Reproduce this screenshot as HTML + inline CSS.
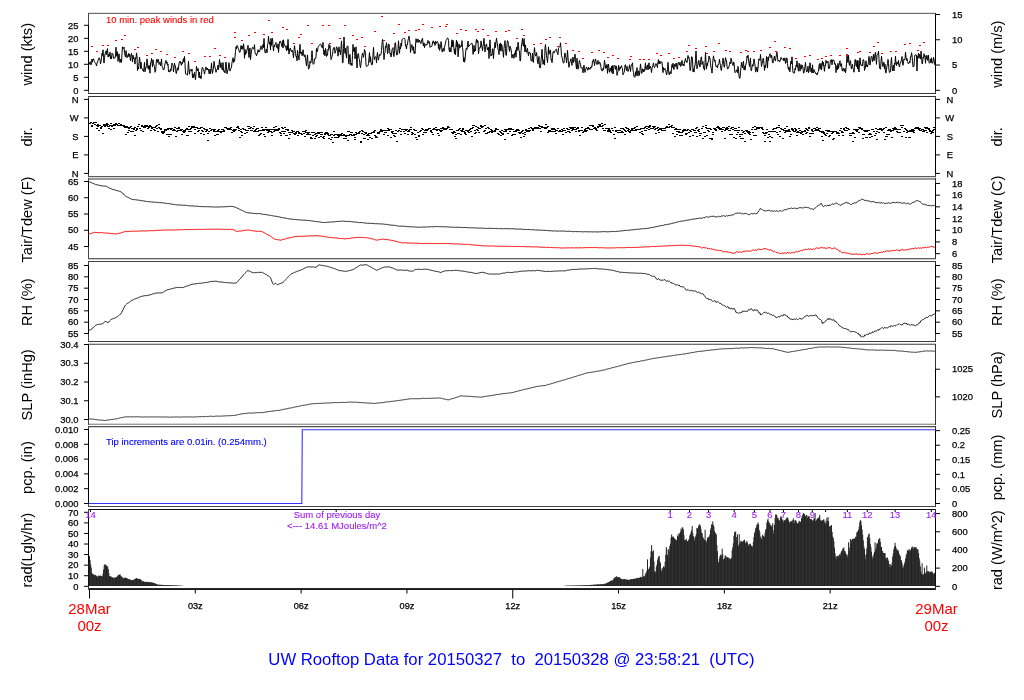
<!DOCTYPE html><html><head><meta charset="utf-8"><style>html,body{margin:0;padding:0;background:#fff;}svg{display:block;will-change:transform}text{font-family:"Liberation Sans",sans-serif;stroke:#000;stroke-width:0.25px}.r{stroke:#f00;stroke-width:.12px}.b{stroke:#00f;stroke-width:.12px}.p{stroke:#a020f0;stroke-width:.12px}.n{stroke:none}</style></head><body>
<svg width="1024" height="700" viewBox="0 0 1024 700">
<rect x="0" y="0" width="1024" height="700" fill="#fff"/>
<g shape-rendering="crispEdges"><rect x="88" y="13" width="848" height="1" fill="#6a6a6a"/><rect x="88" y="12" width="848" height="1" fill="#e6e6e6"/><rect x="88" y="93" width="848" height="1" fill="#3a3a3a"/><rect x="88" y="96" width="848" height="1" fill="#333"/><rect x="88" y="176" width="848" height="1" fill="#5a5a5a"/><rect x="88" y="177" width="848" height="1" fill="#dddddd"/><rect x="88" y="178" width="848" height="1" fill="#9a9a9a"/><rect x="88" y="179" width="848" height="1" fill="#9a9a9a"/><rect x="88" y="258" width="848" height="1" fill="#606060"/><rect x="88" y="259" width="848" height="1" fill="#cfcfcf"/><rect x="88" y="261" width="848" height="1" fill="#444"/><rect x="88" y="341" width="848" height="1" fill="#3c3c3c"/><rect x="88" y="343" width="848" height="1" fill="#cccccc"/><rect x="88" y="344" width="848" height="1" fill="#707070"/><rect x="88" y="424" width="848" height="1" fill="#9c9c9c"/><rect x="88" y="423" width="848" height="1" fill="#d8d8d8"/><rect x="88" y="426" width="848" height="1" fill="#505050"/><rect x="88" y="427" width="848" height="1" fill="#d0d0d0"/><rect x="88" y="506" width="848" height="1" fill="#444"/><rect x="88" y="509" width="848" height="1" fill="#111"/><rect x="88" y="588" width="848" height="1" fill="#2a2a2a"/><rect x="88" y="589" width="848" height="1" fill="#1a1a1a"/><rect x="88" y="13" width="1" height="81" fill="#444"/><rect x="935" y="13" width="1" height="81" fill="#333"/><rect x="88" y="96" width="1" height="81" fill="#444"/><rect x="935" y="96" width="1" height="81" fill="#333"/><rect x="88" y="178" width="1" height="81" fill="#444"/><rect x="935" y="178" width="1" height="81" fill="#333"/><rect x="88" y="261" width="1" height="81" fill="#444"/><rect x="935" y="261" width="1" height="81" fill="#333"/><rect x="88" y="344" width="1" height="81" fill="#444"/><rect x="935" y="344" width="1" height="81" fill="#333"/><rect x="88" y="426" width="1" height="81" fill="#444"/><rect x="935" y="426" width="1" height="81" fill="#333"/><rect x="88" y="509" width="1" height="81" fill="#444"/><rect x="935" y="509" width="1" height="81" fill="#333"/></g>
<line x1="88.5" y1="25.30" x2="88.5" y2="90.30" stroke="#000" stroke-width="1"/>
<line x1="84.0" y1="90.30" x2="88.5" y2="90.30" stroke="#000" stroke-width="1"/>
<text x="78.5" y="93.50" font-size="9.4" text-anchor="end">0</text>
<line x1="84.0" y1="77.30" x2="88.5" y2="77.30" stroke="#000" stroke-width="1"/>
<text x="78.5" y="80.50" font-size="9.4" text-anchor="end">5</text>
<line x1="84.0" y1="64.30" x2="88.5" y2="64.30" stroke="#000" stroke-width="1"/>
<text x="78.5" y="67.50" font-size="9.4" text-anchor="end">10</text>
<line x1="84.0" y1="51.30" x2="88.5" y2="51.30" stroke="#000" stroke-width="1"/>
<text x="78.5" y="54.50" font-size="9.4" text-anchor="end">15</text>
<line x1="84.0" y1="38.30" x2="88.5" y2="38.30" stroke="#000" stroke-width="1"/>
<text x="78.5" y="41.50" font-size="9.4" text-anchor="end">20</text>
<line x1="84.0" y1="25.30" x2="88.5" y2="25.30" stroke="#000" stroke-width="1"/>
<text x="78.5" y="28.50" font-size="9.4" text-anchor="end">25</text>
<line x1="935.5" y1="14.49" x2="935.5" y2="90.30" stroke="#000" stroke-width="1"/>
<line x1="935.5" y1="90.30" x2="940.0" y2="90.30" stroke="#000" stroke-width="1"/>
<text x="952" y="93.50" font-size="9.4">0</text>
<line x1="935.5" y1="65.03" x2="940.0" y2="65.03" stroke="#000" stroke-width="1"/>
<text x="952" y="68.23" font-size="9.4">5</text>
<line x1="935.5" y1="39.76" x2="940.0" y2="39.76" stroke="#000" stroke-width="1"/>
<text x="952" y="42.96" font-size="9.4">10</text>
<line x1="935.5" y1="14.49" x2="940.0" y2="14.49" stroke="#000" stroke-width="1"/>
<text x="952" y="17.69" font-size="9.4">15</text>
<line x1="88.5" y1="99.40" x2="88.5" y2="173.40" stroke="#000" stroke-width="1"/>
<line x1="84.0" y1="99.40" x2="88.5" y2="99.40" stroke="#000" stroke-width="1"/>
<text x="78.5" y="102.60" font-size="9.4" text-anchor="end">N</text>
<line x1="84.0" y1="117.90" x2="88.5" y2="117.90" stroke="#000" stroke-width="1"/>
<text x="78.5" y="121.10" font-size="9.4" text-anchor="end">W</text>
<line x1="84.0" y1="136.40" x2="88.5" y2="136.40" stroke="#000" stroke-width="1"/>
<text x="78.5" y="139.60" font-size="9.4" text-anchor="end">S</text>
<line x1="84.0" y1="154.90" x2="88.5" y2="154.90" stroke="#000" stroke-width="1"/>
<text x="78.5" y="158.10" font-size="9.4" text-anchor="end">E</text>
<line x1="84.0" y1="173.40" x2="88.5" y2="173.40" stroke="#000" stroke-width="1"/>
<text x="78.5" y="176.60" font-size="9.4" text-anchor="end">N</text>
<line x1="935.5" y1="99.4" x2="935.5" y2="173.4" stroke="#000" stroke-width="1"/>
<line x1="935.5" y1="99.40" x2="940.0" y2="99.40" stroke="#000" stroke-width="1"/>
<text x="949.8" y="102.80" font-size="9.4" text-anchor="middle">N</text>
<line x1="935.5" y1="117.90" x2="940.0" y2="117.90" stroke="#000" stroke-width="1"/>
<text x="949.8" y="121.30" font-size="9.4" text-anchor="middle">W</text>
<line x1="935.5" y1="136.40" x2="940.0" y2="136.40" stroke="#000" stroke-width="1"/>
<text x="949.8" y="139.80" font-size="9.4" text-anchor="middle">S</text>
<line x1="935.5" y1="154.90" x2="940.0" y2="154.90" stroke="#000" stroke-width="1"/>
<text x="949.8" y="158.30" font-size="9.4" text-anchor="middle">E</text>
<line x1="935.5" y1="173.40" x2="940.0" y2="173.40" stroke="#000" stroke-width="1"/>
<text x="949.8" y="176.80" font-size="9.4" text-anchor="middle">N</text>
<line x1="88.5" y1="181.50" x2="88.5" y2="246.50" stroke="#000" stroke-width="1"/>
<line x1="84.0" y1="246.50" x2="88.5" y2="246.50" stroke="#000" stroke-width="1"/>
<text x="78.5" y="249.70" font-size="9.4" text-anchor="end">45</text>
<line x1="84.0" y1="230.25" x2="88.5" y2="230.25" stroke="#000" stroke-width="1"/>
<text x="78.5" y="233.45" font-size="9.4" text-anchor="end">50</text>
<line x1="84.0" y1="214.00" x2="88.5" y2="214.00" stroke="#000" stroke-width="1"/>
<text x="78.5" y="217.20" font-size="9.4" text-anchor="end">55</text>
<line x1="84.0" y1="197.75" x2="88.5" y2="197.75" stroke="#000" stroke-width="1"/>
<text x="78.5" y="200.95" font-size="9.4" text-anchor="end">60</text>
<line x1="84.0" y1="181.50" x2="88.5" y2="181.50" stroke="#000" stroke-width="1"/>
<text x="78.5" y="184.70" font-size="9.4" text-anchor="end">65</text>
<line x1="935.5" y1="183.45" x2="935.5" y2="253.65" stroke="#000" stroke-width="1"/>
<line x1="935.5" y1="253.65" x2="940.0" y2="253.65" stroke="#000" stroke-width="1"/>
<text x="952" y="256.85" font-size="9.4">6</text>
<line x1="935.5" y1="241.95" x2="940.0" y2="241.95" stroke="#000" stroke-width="1"/>
<text x="952" y="245.15" font-size="9.4">8</text>
<line x1="935.5" y1="230.25" x2="940.0" y2="230.25" stroke="#000" stroke-width="1"/>
<text x="952" y="233.45" font-size="9.4">10</text>
<line x1="935.5" y1="218.55" x2="940.0" y2="218.55" stroke="#000" stroke-width="1"/>
<text x="952" y="221.75" font-size="9.4">12</text>
<line x1="935.5" y1="206.85" x2="940.0" y2="206.85" stroke="#000" stroke-width="1"/>
<text x="952" y="210.05" font-size="9.4">14</text>
<line x1="935.5" y1="195.15" x2="940.0" y2="195.15" stroke="#000" stroke-width="1"/>
<text x="952" y="198.35" font-size="9.4">16</text>
<line x1="935.5" y1="183.45" x2="940.0" y2="183.45" stroke="#000" stroke-width="1"/>
<text x="952" y="186.65" font-size="9.4">18</text>
<line x1="88.5" y1="265.50" x2="88.5" y2="333.51" stroke="#000" stroke-width="1"/>
<line x1="84.0" y1="333.51" x2="88.5" y2="333.51" stroke="#000" stroke-width="1"/>
<text x="78.5" y="336.71" font-size="9.4" text-anchor="end">55</text>
<line x1="84.0" y1="322.18" x2="88.5" y2="322.18" stroke="#000" stroke-width="1"/>
<text x="78.5" y="325.38" font-size="9.4" text-anchor="end">60</text>
<line x1="84.0" y1="310.84" x2="88.5" y2="310.84" stroke="#000" stroke-width="1"/>
<text x="78.5" y="314.04" font-size="9.4" text-anchor="end">65</text>
<line x1="84.0" y1="299.50" x2="88.5" y2="299.50" stroke="#000" stroke-width="1"/>
<text x="78.5" y="302.70" font-size="9.4" text-anchor="end">70</text>
<line x1="84.0" y1="288.17" x2="88.5" y2="288.17" stroke="#000" stroke-width="1"/>
<text x="78.5" y="291.37" font-size="9.4" text-anchor="end">75</text>
<line x1="84.0" y1="276.83" x2="88.5" y2="276.83" stroke="#000" stroke-width="1"/>
<text x="78.5" y="280.03" font-size="9.4" text-anchor="end">80</text>
<line x1="84.0" y1="265.50" x2="88.5" y2="265.50" stroke="#000" stroke-width="1"/>
<text x="78.5" y="268.70" font-size="9.4" text-anchor="end">85</text>
<line x1="935.5" y1="265.50" x2="935.5" y2="333.51" stroke="#000" stroke-width="1"/>
<line x1="935.5" y1="333.51" x2="940.0" y2="333.51" stroke="#000" stroke-width="1"/>
<text x="952" y="336.71" font-size="9.4">55</text>
<line x1="935.5" y1="322.18" x2="940.0" y2="322.18" stroke="#000" stroke-width="1"/>
<text x="952" y="325.38" font-size="9.4">60</text>
<line x1="935.5" y1="310.84" x2="940.0" y2="310.84" stroke="#000" stroke-width="1"/>
<text x="952" y="314.04" font-size="9.4">65</text>
<line x1="935.5" y1="299.50" x2="940.0" y2="299.50" stroke="#000" stroke-width="1"/>
<text x="952" y="302.70" font-size="9.4">70</text>
<line x1="935.5" y1="288.17" x2="940.0" y2="288.17" stroke="#000" stroke-width="1"/>
<text x="952" y="291.37" font-size="9.4">75</text>
<line x1="935.5" y1="276.83" x2="940.0" y2="276.83" stroke="#000" stroke-width="1"/>
<text x="952" y="280.03" font-size="9.4">80</text>
<line x1="935.5" y1="265.50" x2="940.0" y2="265.50" stroke="#000" stroke-width="1"/>
<text x="952" y="268.70" font-size="9.4">85</text>
<line x1="88.5" y1="344.50" x2="88.5" y2="419.50" stroke="#000" stroke-width="1"/>
<line x1="84.0" y1="419.50" x2="88.5" y2="419.50" stroke="#000" stroke-width="1"/>
<text x="78.5" y="422.70" font-size="9.4" text-anchor="end">30.0</text>
<line x1="84.0" y1="400.75" x2="88.5" y2="400.75" stroke="#000" stroke-width="1"/>
<text x="78.5" y="403.95" font-size="9.4" text-anchor="end">30.1</text>
<line x1="84.0" y1="382.00" x2="88.5" y2="382.00" stroke="#000" stroke-width="1"/>
<text x="78.5" y="385.20" font-size="9.4" text-anchor="end">30.2</text>
<line x1="84.0" y1="363.25" x2="88.5" y2="363.25" stroke="#000" stroke-width="1"/>
<text x="78.5" y="366.45" font-size="9.4" text-anchor="end">30.3</text>
<line x1="84.0" y1="344.50" x2="88.5" y2="344.50" stroke="#000" stroke-width="1"/>
<text x="78.5" y="347.70" font-size="9.4" text-anchor="end">30.4</text>
<line x1="935.5" y1="369.21" x2="935.5" y2="396.89" stroke="#000" stroke-width="1"/>
<line x1="935.5" y1="396.89" x2="940.0" y2="396.89" stroke="#000" stroke-width="1"/>
<text x="952" y="400.09" font-size="9.4">1020</text>
<line x1="935.5" y1="369.21" x2="940.0" y2="369.21" stroke="#000" stroke-width="1"/>
<text x="952" y="372.41" font-size="9.4">1025</text>
<line x1="88.5" y1="429.50" x2="88.5" y2="503.50" stroke="#000" stroke-width="1"/>
<line x1="84.0" y1="503.50" x2="88.5" y2="503.50" stroke="#000" stroke-width="1"/>
<text x="78.5" y="506.70" font-size="9.4" text-anchor="end">0.000</text>
<line x1="84.0" y1="488.70" x2="88.5" y2="488.70" stroke="#000" stroke-width="1"/>
<text x="78.5" y="491.90" font-size="9.4" text-anchor="end">0.002</text>
<line x1="84.0" y1="473.90" x2="88.5" y2="473.90" stroke="#000" stroke-width="1"/>
<text x="78.5" y="477.10" font-size="9.4" text-anchor="end">0.004</text>
<line x1="84.0" y1="459.10" x2="88.5" y2="459.10" stroke="#000" stroke-width="1"/>
<text x="78.5" y="462.30" font-size="9.4" text-anchor="end">0.006</text>
<line x1="84.0" y1="444.30" x2="88.5" y2="444.30" stroke="#000" stroke-width="1"/>
<text x="78.5" y="447.50" font-size="9.4" text-anchor="end">0.008</text>
<line x1="84.0" y1="429.50" x2="88.5" y2="429.50" stroke="#000" stroke-width="1"/>
<text x="78.5" y="432.70" font-size="9.4" text-anchor="end">0.010</text>
<line x1="935.5" y1="430.67" x2="935.5" y2="503.50" stroke="#000" stroke-width="1"/>
<line x1="935.5" y1="503.50" x2="940.0" y2="503.50" stroke="#000" stroke-width="1"/>
<text x="952" y="506.70" font-size="9.4">0</text>
<line x1="935.5" y1="488.93" x2="940.0" y2="488.93" stroke="#000" stroke-width="1"/>
<text x="952" y="492.13" font-size="9.4">0.05</text>
<line x1="935.5" y1="474.37" x2="940.0" y2="474.37" stroke="#000" stroke-width="1"/>
<text x="952" y="477.57" font-size="9.4">0.1</text>
<line x1="935.5" y1="459.80" x2="940.0" y2="459.80" stroke="#000" stroke-width="1"/>
<text x="952" y="463.00" font-size="9.4">0.15</text>
<line x1="935.5" y1="445.23" x2="940.0" y2="445.23" stroke="#000" stroke-width="1"/>
<text x="952" y="448.43" font-size="9.4">0.2</text>
<line x1="935.5" y1="430.67" x2="940.0" y2="430.67" stroke="#000" stroke-width="1"/>
<text x="952" y="433.87" font-size="9.4">0.25</text>
<line x1="88.5" y1="512.31" x2="88.5" y2="586.30" stroke="#000" stroke-width="1"/>
<line x1="84.0" y1="586.30" x2="88.5" y2="586.30" stroke="#000" stroke-width="1"/>
<text x="78.5" y="589.50" font-size="9.4" text-anchor="end">0</text>
<line x1="84.0" y1="575.73" x2="88.5" y2="575.73" stroke="#000" stroke-width="1"/>
<text x="78.5" y="578.93" font-size="9.4" text-anchor="end">10</text>
<line x1="84.0" y1="565.16" x2="88.5" y2="565.16" stroke="#000" stroke-width="1"/>
<text x="78.5" y="568.36" font-size="9.4" text-anchor="end">20</text>
<line x1="84.0" y1="554.59" x2="88.5" y2="554.59" stroke="#000" stroke-width="1"/>
<text x="78.5" y="557.79" font-size="9.4" text-anchor="end">30</text>
<line x1="84.0" y1="544.02" x2="88.5" y2="544.02" stroke="#000" stroke-width="1"/>
<text x="78.5" y="547.22" font-size="9.4" text-anchor="end">40</text>
<line x1="84.0" y1="533.45" x2="88.5" y2="533.45" stroke="#000" stroke-width="1"/>
<text x="78.5" y="536.65" font-size="9.4" text-anchor="end">50</text>
<line x1="84.0" y1="522.88" x2="88.5" y2="522.88" stroke="#000" stroke-width="1"/>
<text x="78.5" y="526.08" font-size="9.4" text-anchor="end">60</text>
<line x1="84.0" y1="512.31" x2="88.5" y2="512.31" stroke="#000" stroke-width="1"/>
<text x="78.5" y="515.51" font-size="9.4" text-anchor="end">70</text>
<line x1="935.5" y1="513.59" x2="935.5" y2="586.30" stroke="#000" stroke-width="1"/>
<line x1="935.5" y1="586.30" x2="940.0" y2="586.30" stroke="#000" stroke-width="1"/>
<text x="952" y="589.50" font-size="9.4">0</text>
<line x1="935.5" y1="568.12" x2="940.0" y2="568.12" stroke="#000" stroke-width="1"/>
<text x="952" y="571.32" font-size="9.4">200</text>
<line x1="935.5" y1="549.95" x2="940.0" y2="549.95" stroke="#000" stroke-width="1"/>
<text x="952" y="553.15" font-size="9.4">400</text>
<line x1="935.5" y1="531.77" x2="940.0" y2="531.77" stroke="#000" stroke-width="1"/>
<text x="952" y="534.97" font-size="9.4">600</text>
<line x1="935.5" y1="513.59" x2="940.0" y2="513.59" stroke="#000" stroke-width="1"/>
<text x="952" y="516.79" font-size="9.4">800</text>
<text transform="translate(31.5,54.20) rotate(-90)" font-size="14.6" class="n" text-anchor="middle">wind (kts)</text>
<text transform="translate(1001.5,54.20) rotate(-90)" font-size="14.6" class="n" text-anchor="middle">wind (m/s)</text>
<text transform="translate(31.5,136.87) rotate(-90)" font-size="14.6" class="n" text-anchor="middle">dir.</text>
<text transform="translate(1001.5,136.87) rotate(-90)" font-size="14.6" class="n" text-anchor="middle">dir.</text>
<text transform="translate(31.5,219.53) rotate(-90)" font-size="14.6" class="n" text-anchor="middle">Tair/Tdew (F)</text>
<text transform="translate(1001.5,219.53) rotate(-90)" font-size="14.6" class="n" text-anchor="middle">Tair/Tdew (C)</text>
<text transform="translate(31.5,302.20) rotate(-90)" font-size="14.6" class="n" text-anchor="middle">RH (%)</text>
<text transform="translate(1001.5,302.20) rotate(-90)" font-size="14.6" class="n" text-anchor="middle">RH (%)</text>
<text transform="translate(31.5,384.87) rotate(-90)" font-size="14.6" class="n" text-anchor="middle">SLP (inHg)</text>
<text transform="translate(1001.5,384.87) rotate(-90)" font-size="14.6" class="n" text-anchor="middle">SLP (hPa)</text>
<text transform="translate(31.5,467.54) rotate(-90)" font-size="14.6" class="n" text-anchor="middle">pcp. (in)</text>
<text transform="translate(1001.5,467.54) rotate(-90)" font-size="14.6" class="n" text-anchor="middle">pcp. (mm)</text>
<text transform="translate(31.5,550.20) rotate(-90)" font-size="14.6" class="n" text-anchor="middle">rad(Lgly/hr)</text>
<text transform="translate(1001.5,550.20) rotate(-90)" font-size="14.6" class="n" text-anchor="middle">rad (W/m^2)</text>
<line x1="89.50" y1="589.5" x2="89.50" y2="598.5" stroke="#000" stroke-width="1"/>
<line x1="195.31" y1="589.5" x2="195.31" y2="593.5" stroke="#000" stroke-width="1"/>
<text x="195.31" y="609" font-size="9.2" text-anchor="middle">03z</text>
<line x1="301.12" y1="589.5" x2="301.12" y2="593.5" stroke="#000" stroke-width="1"/>
<text x="301.12" y="609" font-size="9.2" text-anchor="middle">06z</text>
<line x1="406.93" y1="589.5" x2="406.93" y2="593.5" stroke="#000" stroke-width="1"/>
<text x="406.93" y="609" font-size="9.2" text-anchor="middle">09z</text>
<line x1="512.74" y1="589.5" x2="512.74" y2="598.5" stroke="#000" stroke-width="1"/>
<text x="512.74" y="609" font-size="9.2" text-anchor="middle">12z</text>
<line x1="618.55" y1="589.5" x2="618.55" y2="593.5" stroke="#000" stroke-width="1"/>
<text x="618.55" y="609" font-size="9.2" text-anchor="middle">15z</text>
<line x1="724.36" y1="589.5" x2="724.36" y2="593.5" stroke="#000" stroke-width="1"/>
<text x="724.36" y="609" font-size="9.2" text-anchor="middle">18z</text>
<line x1="830.17" y1="589.5" x2="830.17" y2="593.5" stroke="#000" stroke-width="1"/>
<text x="830.17" y="609" font-size="9.2" text-anchor="middle">21z</text>
<text x="89.5" y="614" font-size="15" fill="#f00" class="n" text-anchor="middle">28Mar</text>
<text x="89.5" y="631" font-size="15" fill="#f00" class="n" text-anchor="middle">00z</text>
<text x="936.5" y="614" font-size="15" fill="#f00" class="n" text-anchor="middle">29Mar</text>
<text x="936.5" y="631" font-size="15" fill="#f00" class="n" text-anchor="middle">00z</text>
<text x="511.5" y="665" font-size="16.7" fill="#00f" class="n" text-anchor="middle" style="white-space:pre" xml:space="preserve">UW Rooftop Data for 20150327  to  20150328 @ 23:58:21  (UTC)</text>
<polyline fill="none" stroke="#000" stroke-width="1" stroke-linejoin="round" points="89.0,63.0 89.5,64.2 90.0,61.8 90.5,62.0 91.0,64.9 91.5,62.8 92.0,59.0 92.5,62.2 93.0,59.1 93.5,58.8 94.0,60.4 94.5,61.4 95.0,62.7 95.5,63.4 96.0,64.1 96.5,66.0 97.0,63.0 97.5,62.0 98.0,60.6 98.5,58.5 99.0,57.7 99.5,58.0 100.0,60.2 100.5,63.9 101.0,61.8 101.5,58.1 102.0,53.4 102.5,55.4 103.0,49.8 103.5,57.4 104.0,63.1 104.5,57.7 105.0,53.5 105.5,53.4 106.0,50.8 106.5,54.7 107.0,50.8 107.5,48.6 108.0,57.1 108.5,55.9 109.0,54.2 109.5,56.2 110.0,52.1 110.5,58.9 111.0,56.3 111.5,58.8 112.0,53.1 112.5,53.8 113.0,54.0 113.5,58.3 114.0,58.2 114.5,58.1 115.0,58.1 115.5,55.1 116.0,47.2 116.5,55.3 117.0,56.4 117.5,51.8 118.0,61.4 118.5,57.8 119.0,53.9 119.5,58.7 120.0,62.5 120.5,59.2 121.0,62.1 121.5,62.3 122.0,53.3 122.5,46.8 123.0,48.7 123.5,48.4 124.0,47.1 124.5,52.9 125.0,55.0 125.5,57.0 126.0,50.6 126.5,53.8 127.0,57.8 127.5,55.8 128.0,56.0 128.5,53.5 129.0,56.9 129.5,53.9 130.0,56.2 130.5,60.9 131.0,55.4 131.5,53.3 132.0,56.6 132.5,62.1 133.0,55.2 133.5,58.5 134.0,57.6 134.5,60.5 135.0,64.1 135.5,57.7 136.0,58.6 136.5,52.9 137.0,56.1 137.5,70.5 138.0,67.3 138.5,68.9 139.0,63.1 139.5,57.1 140.0,60.4 140.5,68.7 141.0,62.2 141.5,68.4 142.0,68.7 142.5,68.9 143.0,71.0 143.5,71.5 144.0,67.9 144.5,62.4 145.0,71.8 145.5,67.9 146.0,67.9 146.5,65.4 147.0,58.9 147.5,62.8 148.0,68.7 148.5,65.7 149.0,69.5 149.5,65.7 150.0,73.2 150.5,62.9 151.0,62.7 151.5,58.5 152.0,63.1 152.5,66.9 153.0,59.7 153.5,63.6 154.0,65.1 154.5,66.5 155.0,72.3 155.5,71.4 156.0,66.7 156.5,59.3 157.0,60.1 157.5,62.4 158.0,59.1 158.5,59.7 159.0,64.5 159.5,63.5 160.0,62.2 160.5,65.8 161.0,63.7 161.5,58.9 162.0,66.1 162.5,67.1 163.0,68.9 163.5,70.1 164.0,69.5 164.5,66.6 165.0,63.9 165.5,61.4 166.0,60.3 166.5,63.4 167.0,61.9 167.5,65.2 168.0,64.0 168.5,71.6 169.0,70.5 169.5,71.8 170.0,72.0 170.5,68.9 171.0,70.7 171.5,65.6 172.0,63.1 172.5,64.6 173.0,65.2 173.5,71.9 174.0,67.6 174.5,63.2 175.0,66.2 175.5,66.1 176.0,73.3 176.5,73.4 177.0,69.7 177.5,67.7 178.0,70.3 178.5,68.0 179.0,63.9 179.5,61.6 180.0,62.4 180.5,61.4 181.0,64.4 181.5,65.3 182.0,62.3 182.5,63.6 183.0,60.7 183.5,58.5 184.0,62.1 184.5,56.4 185.0,63.7 185.5,73.9 186.0,74.2 186.5,74.1 187.0,74.9 187.5,75.1 188.0,69.2 188.5,61.0 189.0,69.7 189.5,74.2 190.0,69.6 190.5,69.5 191.0,70.3 191.5,71.2 192.0,69.0 192.5,77.7 193.0,74.5 193.5,77.5 194.0,74.0 194.5,72.4 195.0,77.4 195.5,79.7 196.0,73.5 196.5,66.4 197.0,69.5 197.5,71.0 198.0,68.4 198.5,70.8 199.0,77.6 199.5,72.1 200.0,78.1 200.5,76.0 201.0,78.7 201.5,74.5 202.0,68.1 202.5,67.2 203.0,68.8 203.5,70.5 204.0,70.8 204.5,74.2 205.0,71.5 205.5,67.5 206.0,66.9 206.5,69.4 207.0,70.1 207.5,68.2 208.0,69.9 208.5,69.0 209.0,73.8 209.5,73.3 210.0,69.2 210.5,73.8 211.0,69.7 211.5,62.9 212.0,69.7 212.5,73.4 213.0,70.2 213.5,68.5 214.0,61.3 214.5,65.2 215.0,67.3 215.5,69.2 216.0,72.3 216.5,69.8 217.0,70.0 217.5,69.3 218.0,65.0 218.5,69.5 219.0,65.9 219.5,59.4 220.0,64.1 220.5,67.4 221.0,62.8 221.5,67.5 222.0,69.2 222.5,70.0 223.0,62.5 223.5,71.2 224.0,71.3 224.5,70.7 225.0,73.0 225.5,66.3 226.0,62.0 226.5,68.1 227.0,73.8 227.5,70.5 228.0,70.4 228.5,66.2 229.0,62.6 229.5,67.6 230.0,71.1 230.5,69.7 231.0,68.3 231.5,66.9 232.0,62.8 232.5,59.6 233.0,57.8 233.5,62.5 234.0,59.4 234.5,61.4 235.0,56.9 235.5,51.4 236.0,46.8 236.5,48.9 237.0,45.4 237.5,46.1 238.0,48.0 238.5,48.8 239.0,50.7 239.5,52.3 240.0,52.3 240.5,49.5 241.0,45.6 241.5,49.2 242.0,45.8 242.5,47.0 243.0,49.5 243.5,43.8 244.0,47.4 244.5,58.3 245.0,49.5 245.5,54.7 246.0,52.5 246.5,53.1 247.0,48.8 247.5,48.9 248.0,45.3 248.5,51.4 249.0,57.5 249.5,50.0 250.0,47.9 250.5,59.6 251.0,54.7 251.5,51.6 252.0,48.8 252.5,47.4 253.0,47.4 253.5,48.9 254.0,48.8 254.5,44.7 255.0,52.3 255.5,53.9 256.0,53.5 256.5,55.8 257.0,53.6 257.5,53.4 258.0,49.7 258.5,51.8 259.0,51.5 259.5,52.0 260.0,50.0 260.5,47.6 261.0,45.9 261.5,47.5 262.0,49.5 262.5,46.4 263.0,44.5 263.5,47.6 264.0,38.4 264.5,47.1 265.0,52.7 265.5,52.7 266.0,50.1 266.5,49.0 267.0,52.8 267.5,44.8 268.0,43.4 268.5,36.3 269.0,41.8 269.5,44.2 270.0,42.1 270.5,49.9 271.0,38.4 271.5,45.4 272.0,40.2 272.5,38.4 273.0,45.6 273.5,51.0 274.0,45.3 274.5,46.6 275.0,44.6 275.5,43.5 276.0,42.4 276.5,47.2 277.0,47.5 277.5,48.4 278.0,43.9 278.5,52.5 279.0,47.3 279.5,41.7 280.0,41.4 280.5,41.2 281.0,43.7 281.5,43.9 282.0,46.7 282.5,40.6 283.0,48.1 283.5,39.8 284.0,43.9 284.5,44.3 285.0,46.5 285.5,46.1 286.0,48.0 286.5,50.8 287.0,45.6 287.5,49.9 288.0,39.4 288.5,48.9 289.0,54.1 289.5,50.0 290.0,48.1 290.5,48.4 291.0,51.1 291.5,51.7 292.0,50.1 292.5,51.3 293.0,53.7 293.5,58.0 294.0,50.6 294.5,45.7 295.0,49.5 295.5,53.4 296.0,56.5 296.5,56.0 297.0,60.8 297.5,50.3 298.0,54.9 298.5,57.1 299.0,59.9 299.5,50.7 300.0,44.3 300.5,53.2 301.0,53.6 301.5,51.9 302.0,55.7 302.5,55.0 303.0,49.7 303.5,53.6 304.0,56.1 304.5,56.8 305.0,54.7 305.5,58.2 306.0,62.4 306.5,66.0 307.0,59.8 307.5,54.9 308.0,63.2 308.5,69.0 309.0,68.6 309.5,67.7 310.0,61.2 310.5,63.2 311.0,62.5 311.5,57.5 312.0,50.7 312.5,57.4 313.0,64.3 313.5,64.1 314.0,63.6 314.5,58.8 315.0,58.5 315.5,58.8 316.0,56.9 316.5,48.5 317.0,51.6 317.5,51.3 318.0,47.5 318.5,46.2 319.0,45.7 319.5,44.9 320.0,44.4 320.5,43.8 321.0,44.6 321.5,47.1 322.0,47.5 322.5,47.8 323.0,42.4 323.5,51.4 324.0,54.8 324.5,50.4 325.0,55.8 325.5,48.4 326.0,50.9 326.5,56.5 327.0,55.4 327.5,55.1 328.0,49.0 328.5,50.2 329.0,44.4 329.5,48.3 330.0,45.6 330.5,52.9 331.0,59.6 331.5,58.4 332.0,56.7 332.5,54.3 333.0,50.2 333.5,47.7 334.0,47.6 334.5,47.5 335.0,53.3 335.5,51.6 336.0,50.3 336.5,46.9 337.0,47.3 337.5,48.6 338.0,56.2 338.5,52.4 339.0,46.8 339.5,51.5 340.0,50.6 340.5,54.9 341.0,48.3 341.5,40.9 342.0,49.2 342.5,62.8 343.0,62.8 343.5,48.5 344.0,37.0 344.5,46.5 345.0,53.4 345.5,48.3 346.0,54.1 346.5,58.1 347.0,46.4 347.5,45.9 348.0,46.2 348.5,62.2 349.0,64.2 349.5,55.8 350.0,54.3 350.5,62.4 351.0,65.2 351.5,63.0 352.0,65.6 352.5,55.3 353.0,44.4 353.5,51.3 354.0,51.3 354.5,47.6 355.0,58.9 355.5,54.3 356.0,46.8 356.5,58.3 357.0,68.0 357.5,55.6 358.0,53.7 358.5,53.8 359.0,58.8 359.5,59.6 360.0,65.4 360.5,67.8 361.0,64.0 361.5,59.6 362.0,55.8 362.5,53.0 363.0,54.9 363.5,57.3 364.0,54.6 364.5,49.5 365.0,50.9 365.5,55.2 366.0,64.9 366.5,66.4 367.0,66.2 367.5,66.1 368.0,65.5 368.5,63.6 369.0,57.9 369.5,52.6 370.0,62.2 370.5,56.8 371.0,61.6 371.5,64.9 372.0,64.6 372.5,64.4 373.0,54.9 373.5,47.4 374.0,56.6 374.5,59.5 375.0,57.4 375.5,56.6 376.0,57.1 376.5,62.7 377.0,55.4 377.5,52.4 378.0,58.1 378.5,60.1 379.0,56.9 379.5,54.4 380.0,55.6 380.5,55.0 381.0,54.3 381.5,50.7 382.0,44.2 382.5,39.4 383.0,43.2 383.5,50.6 384.0,59.6 384.5,53.2 385.0,52.6 385.5,45.9 386.0,47.6 386.5,42.7 387.0,46.3 387.5,53.6 388.0,52.9 388.5,44.1 389.0,44.0 389.5,47.6 390.0,54.1 390.5,53.3 391.0,57.0 391.5,55.2 392.0,49.7 392.5,48.4 393.0,47.6 393.5,55.3 394.0,56.6 394.5,50.7 395.0,42.9 395.5,42.8 396.0,49.1 396.5,54.8 397.0,55.0 397.5,54.7 398.0,48.6 398.5,40.8 399.0,48.2 399.5,53.3 400.0,46.7 400.5,48.9 401.0,43.0 401.5,46.3 402.0,39.6 402.5,38.9 403.0,38.7 403.5,38.4 404.0,38.5 404.5,38.5 405.0,39.5 405.5,46.0 406.0,45.9 406.5,49.0 407.0,44.1 407.5,44.5 408.0,40.3 408.5,38.5 409.0,36.1 409.5,39.2 410.0,42.5 410.5,52.5 411.0,48.6 411.5,45.2 412.0,44.6 412.5,48.7 413.0,50.4 413.5,46.7 414.0,53.3 414.5,51.3 415.0,53.6 415.5,45.0 416.0,38.7 416.5,40.0 417.0,42.6 417.5,40.4 418.0,38.9 418.5,42.0 419.0,42.4 419.5,40.1 420.0,41.8 420.5,43.0 421.0,43.5 421.5,40.1 422.0,40.1 422.5,38.2 423.0,43.9 423.5,46.0 424.0,42.8 424.5,47.6 425.0,44.9 425.5,45.1 426.0,44.1 426.5,45.1 427.0,44.9 427.5,41.4 428.0,40.4 428.5,42.9 429.0,43.3 429.5,41.7 430.0,47.4 430.5,46.7 431.0,46.2 431.5,46.8 432.0,45.7 432.5,43.0 433.0,40.8 433.5,41.2 434.0,43.4 434.5,42.0 435.0,45.5 435.5,41.5 436.0,41.5 436.5,43.4 437.0,41.7 437.5,41.7 438.0,42.3 438.5,48.5 439.0,44.1 439.5,50.4 440.0,48.7 440.5,47.4 441.0,41.6 441.5,44.3 442.0,51.6 442.5,52.1 443.0,48.6 443.5,48.4 444.0,51.2 444.5,47.1 445.0,45.1 445.5,43.2 446.0,40.5 446.5,39.7 447.0,38.9 447.5,37.8 448.0,38.5 448.5,40.4 449.0,49.6 449.5,51.7 450.0,47.6 450.5,51.3 451.0,52.1 451.5,44.2 452.0,39.8 452.5,46.9 453.0,40.4 453.5,44.0 454.0,49.1 454.5,53.9 455.0,48.7 455.5,55.0 456.0,45.0 456.5,40.1 457.0,47.0 457.5,41.8 458.0,56.8 458.5,52.4 459.0,43.9 459.5,48.2 460.0,47.4 460.5,47.1 461.0,45.1 461.5,46.3 462.0,40.7 462.5,47.7 463.0,51.2 463.5,61.6 464.0,57.6 464.5,62.2 465.0,60.2 465.5,54.0 466.0,48.7 466.5,48.2 467.0,49.5 467.5,44.7 468.0,41.0 468.5,46.8 469.0,46.4 469.5,45.1 470.0,44.5 470.5,44.2 471.0,43.8 471.5,43.4 472.0,43.1 472.5,46.1 473.0,54.3 473.5,52.8 474.0,45.3 474.5,51.7 475.0,49.1 475.5,50.9 476.0,42.4 476.5,39.1 477.0,43.0 477.5,40.4 478.0,40.9 478.5,53.7 479.0,49.6 479.5,48.7 480.0,47.0 480.5,47.4 481.0,40.9 481.5,44.1 482.0,47.2 482.5,50.6 483.0,46.0 483.5,43.2 484.0,38.3 484.5,46.4 485.0,51.9 485.5,47.8 486.0,45.1 486.5,43.9 487.0,47.5 487.5,50.1 488.0,47.8 488.5,47.1 489.0,58.5 489.5,47.6 490.0,39.9 490.5,48.3 491.0,56.1 491.5,54.0 492.0,55.1 492.5,48.7 493.0,49.5 493.5,58.8 494.0,50.6 494.5,46.6 495.0,42.3 495.5,47.6 496.0,42.1 496.5,38.2 497.0,42.0 497.5,43.7 498.0,49.9 498.5,50.5 499.0,54.6 499.5,43.8 500.0,50.8 500.5,43.0 501.0,51.2 501.5,44.0 502.0,46.0 502.5,49.6 503.0,52.1 503.5,57.3 504.0,48.4 504.5,43.6 505.0,40.6 505.5,48.6 506.0,55.5 506.5,55.1 507.0,43.8 507.5,40.6 508.0,41.6 508.5,44.7 509.0,48.0 509.5,51.4 510.0,46.2 510.5,47.9 511.0,49.0 511.5,53.3 512.0,58.1 512.5,54.7 513.0,54.4 513.5,54.8 514.0,58.3 514.5,53.1 515.0,54.8 515.5,50.3 516.0,57.2 516.5,47.2 517.0,50.6 517.5,49.6 518.0,42.2 518.5,45.3 519.0,51.3 519.5,51.3 520.0,61.0 520.5,60.9 521.0,51.2 521.5,44.6 522.0,42.4 522.5,38.3 523.0,45.3 523.5,46.3 524.0,38.6 524.5,45.0 525.0,52.0 525.5,44.9 526.0,50.8 526.5,52.3 527.0,50.7 527.5,48.4 528.0,53.6 528.5,55.7 529.0,52.0 529.5,53.1 530.0,53.2 530.5,53.1 531.0,60.9 531.5,60.7 532.0,61.2 532.5,53.2 533.0,61.8 533.5,62.4 534.0,53.4 534.5,47.6 535.0,53.1 535.5,55.8 536.0,56.1 536.5,52.5 537.0,55.7 537.5,62.5 538.0,63.8 538.5,59.2 539.0,56.5 539.5,67.4 540.0,68.1 540.5,67.7 541.0,60.9 541.5,55.9 542.0,49.3 542.5,58.0 543.0,64.3 543.5,63.0 544.0,59.5 544.5,65.1 545.0,48.0 545.5,44.5 546.0,50.4 546.5,55.7 547.0,58.8 547.5,62.6 548.0,55.9 548.5,46.9 549.0,54.3 549.5,51.0 550.0,51.1 550.5,49.9 551.0,59.6 551.5,59.0 552.0,62.7 552.5,57.9 553.0,51.8 553.5,51.5 554.0,52.7 554.5,52.8 555.0,50.3 555.5,49.9 556.0,49.6 556.5,49.2 557.0,52.2 557.5,53.3 558.0,54.7 558.5,48.2 559.0,47.3 559.5,46.9 560.0,46.4 560.5,42.8 561.0,48.3 561.5,55.6 562.0,57.1 562.5,59.4 563.0,62.5 563.5,62.9 564.0,63.0 564.5,55.1 565.0,52.9 565.5,56.9 566.0,57.2 566.5,62.8 567.0,57.7 567.5,50.4 568.0,57.3 568.5,64.3 569.0,67.3 569.5,63.8 570.0,61.7 570.5,60.9 571.0,58.7 571.5,63.2 572.0,65.4 572.5,59.6 573.0,57.0 573.5,62.6 574.0,61.2 574.5,57.5 575.0,54.1 575.5,59.6 576.0,64.9 576.5,69.0 577.0,58.2 577.5,67.4 578.0,69.2 578.5,68.4 579.0,62.1 579.5,60.4 580.0,62.9 580.5,64.5 581.0,67.9 581.5,68.1 582.0,67.4 582.5,69.3 583.0,72.8 583.5,68.3 584.0,65.2 584.5,68.8 585.0,72.4 585.5,69.4 586.0,69.0 586.5,67.0 587.0,67.9 587.5,70.0 588.0,70.2 588.5,67.4 589.0,69.1 589.5,68.1 590.0,69.3 590.5,67.0 591.0,68.1 591.5,65.9 592.0,66.4 592.5,60.9 593.0,61.6 593.5,59.4 594.0,61.6 594.5,65.6 595.0,61.6 595.5,58.9 596.0,61.4 596.5,63.9 597.0,64.6 597.5,62.8 598.0,60.3 598.5,63.8 599.0,64.3 599.5,62.0 600.0,62.4 600.5,63.5 601.0,67.8 601.5,70.4 602.0,70.7 602.5,70.9 603.0,68.4 603.5,69.8 604.0,65.3 604.5,60.3 605.0,64.0 605.5,68.4 606.0,65.6 606.5,68.0 607.0,64.4 607.5,73.4 608.0,66.7 608.5,64.0 609.0,70.0 609.5,72.3 610.0,68.2 610.5,68.3 611.0,71.3 611.5,66.1 612.0,72.7 612.5,65.6 613.0,74.0 613.5,70.7 614.0,65.2 614.5,65.8 615.0,65.6 615.5,69.4 616.0,65.8 616.5,66.9 617.0,75.4 617.5,72.9 618.0,71.7 618.5,65.3 619.0,70.5 619.5,70.2 620.0,66.8 620.5,68.6 621.0,66.8 621.5,65.6 622.0,67.5 622.5,68.3 623.0,74.8 623.5,73.4 624.0,72.5 624.5,71.3 625.0,64.9 625.5,64.8 626.0,68.4 626.5,70.5 627.0,66.3 627.5,67.4 628.0,71.5 628.5,69.4 629.0,68.8 629.5,64.8 630.0,68.1 630.5,71.6 631.0,66.4 631.5,64.7 632.0,64.9 632.5,62.8 633.0,70.4 633.5,72.5 634.0,76.7 634.5,77.0 635.0,77.2 635.5,71.7 636.0,75.8 636.5,72.7 637.0,67.6 637.5,73.7 638.0,76.1 638.5,70.9 639.0,72.9 639.5,75.3 640.0,69.0 640.5,63.9 641.0,68.3 641.5,73.1 642.0,73.3 642.5,68.9 643.0,69.0 643.5,71.9 644.0,69.7 644.5,71.3 645.0,67.1 645.5,62.8 646.0,69.7 646.5,67.0 647.0,67.3 647.5,64.9 648.0,70.0 648.5,66.4 649.0,62.8 649.5,68.9 650.0,68.0 650.5,66.3 651.0,68.4 651.5,72.6 652.0,68.4 652.5,67.2 653.0,65.1 653.5,62.9 654.0,66.6 654.5,67.7 655.0,66.6 655.5,65.4 656.0,63.5 656.5,65.1 657.0,66.0 657.5,67.7 658.0,61.6 658.5,59.6 659.0,64.0 659.5,61.2 660.0,63.8 660.5,61.6 661.0,61.7 661.5,61.9 662.0,62.0 662.5,68.1 663.0,72.6 663.5,67.6 664.0,69.9 664.5,69.7 665.0,68.5 665.5,69.4 666.0,72.1 666.5,75.0 667.0,73.1 667.5,69.7 668.0,62.3 668.5,69.1 669.0,74.7 669.5,74.5 670.0,71.8 670.5,71.7 671.0,73.8 671.5,68.7 672.0,64.5 672.5,67.3 673.0,63.2 673.5,69.0 674.0,69.6 674.5,64.3 675.0,65.1 675.5,66.5 676.0,63.0 676.5,63.7 677.0,69.1 677.5,69.0 678.0,62.7 678.5,62.4 679.0,64.1 679.5,65.1 680.0,62.2 680.5,66.3 681.0,66.1 681.5,63.8 682.0,60.4 682.5,63.8 683.0,65.6 683.5,64.0 684.0,65.9 684.5,61.3 685.0,60.4 685.5,58.4 686.0,61.7 686.5,61.1 687.0,62.6 687.5,59.6 688.0,55.5 688.5,58.2 689.0,57.5 689.5,61.3 690.0,70.5 690.5,70.5 691.0,64.9 691.5,56.8 692.0,56.8 692.5,59.3 693.0,71.7 693.5,68.7 694.0,72.1 694.5,66.1 695.0,66.2 695.5,59.7 696.0,51.0 696.5,60.4 697.0,68.8 697.5,65.5 698.0,64.8 698.5,60.5 699.0,60.6 699.5,66.6 700.0,67.1 700.5,62.8 701.0,57.7 701.5,56.8 702.0,64.5 702.5,62.6 703.0,61.5 703.5,68.3 704.0,68.5 704.5,70.2 705.0,62.7 705.5,52.4 706.0,62.6 706.5,69.1 707.0,63.5 707.5,65.5 708.0,61.6 708.5,61.5 709.0,56.0 709.5,58.5 710.0,58.1 710.5,63.3 711.0,67.8 711.5,68.8 712.0,73.1 712.5,65.9 713.0,59.2 713.5,55.8 714.0,58.9 714.5,61.3 715.0,60.1 715.5,63.7 716.0,66.6 716.5,66.7 717.0,65.8 717.5,67.8 718.0,64.4 718.5,64.5 719.0,63.2 719.5,59.2 720.0,63.3 720.5,65.4 721.0,70.0 721.5,70.5 722.0,64.8 722.5,63.5 723.0,58.1 723.5,60.9 724.0,66.6 724.5,67.3 725.0,61.9 725.5,57.6 726.0,59.9 726.5,60.3 727.0,66.2 727.5,69.0 728.0,68.7 728.5,68.3 729.0,66.3 729.5,64.7 730.0,62.0 730.5,63.6 731.0,58.1 731.5,59.5 732.0,63.5 732.5,63.5 733.0,65.5 733.5,62.0 734.0,62.4 734.5,68.5 735.0,72.7 735.5,72.3 736.0,71.8 736.5,69.9 737.0,70.2 737.5,72.8 738.0,66.4 738.5,69.9 739.0,76.0 739.5,78.1 740.0,78.4 740.5,71.1 741.0,67.6 741.5,62.0 742.0,65.6 742.5,67.9 743.0,63.6 743.5,61.3 744.0,69.8 744.5,66.4 745.0,70.2 745.5,65.9 746.0,63.8 746.5,61.7 747.0,56.2 747.5,57.9 748.0,55.2 748.5,59.9 749.0,63.6 749.5,66.6 750.0,61.0 750.5,58.0 751.0,70.5 751.5,70.7 752.0,66.9 752.5,64.7 753.0,66.2 753.5,62.7 754.0,58.9 754.5,62.2 755.0,65.0 755.5,71.7 756.0,71.8 756.5,68.0 757.0,67.0 757.5,72.1 758.0,68.3 758.5,61.2 759.0,58.8 759.5,60.0 760.0,60.5 760.5,54.5 761.0,59.8 761.5,66.5 762.0,63.7 762.5,63.0 763.0,58.3 763.5,58.6 764.0,64.6 764.5,70.4 765.0,65.1 765.5,67.5 766.0,63.5 766.5,56.4 767.0,62.0 767.5,68.1 768.0,57.1 768.5,60.5 769.0,55.9 769.5,55.7 770.0,53.7 770.5,55.4 771.0,57.8 771.5,55.1 772.0,58.0 772.5,62.6 773.0,63.1 773.5,60.3 774.0,57.9 774.5,56.0 775.0,60.6 775.5,60.9 776.0,57.2 776.5,54.3 777.0,52.1 777.5,57.2 778.0,61.3 778.5,60.8 779.0,60.1 779.5,61.7 780.0,61.5 780.5,60.3 781.0,57.4 781.5,58.8 782.0,58.5 782.5,59.1 783.0,59.8 783.5,58.3 784.0,61.1 784.5,58.5 785.0,57.8 785.5,63.4 786.0,63.1 786.5,58.1 787.0,58.0 787.5,63.5 788.0,67.5 788.5,69.6 789.0,67.0 789.5,71.6 790.0,71.9 790.5,63.9 791.0,61.0 791.5,63.7 792.0,56.8 792.5,65.7 793.0,72.7 793.5,72.9 794.0,73.0 794.5,73.0 795.0,68.5 795.5,70.0 796.0,65.1 796.5,66.4 797.0,60.9 797.5,67.2 798.0,68.3 798.5,71.2 799.0,63.2 799.5,64.8 800.0,71.2 800.5,67.6 801.0,64.5 801.5,69.1 802.0,65.9 802.5,65.2 803.0,68.2 803.5,73.2 804.0,72.5 804.5,68.9 805.0,66.4 805.5,62.4 806.0,68.8 806.5,72.1 807.0,71.6 807.5,71.0 808.0,66.2 808.5,72.7 809.0,71.3 809.5,67.2 810.0,62.7 810.5,66.3 811.0,71.8 811.5,68.5 812.0,73.0 812.5,64.8 813.0,72.0 813.5,73.0 814.0,69.5 814.5,71.5 815.0,71.6 815.5,73.5 816.0,73.4 816.5,73.5 817.0,75.0 817.5,74.0 818.0,71.7 818.5,71.3 819.0,65.7 819.5,63.6 820.0,69.3 820.5,67.0 821.0,63.3 821.5,70.0 822.0,65.4 822.5,60.9 823.0,65.5 823.5,62.5 824.0,67.6 824.5,71.3 825.0,65.6 825.5,66.1 826.0,60.2 826.5,62.9 827.0,63.1 827.5,61.8 828.0,61.1 828.5,68.6 829.0,67.0 829.5,68.3 830.0,63.5 830.5,60.3 831.0,59.5 831.5,59.9 832.0,64.8 832.5,60.0 833.0,60.0 833.5,60.1 834.0,60.2 834.5,64.1 835.0,64.5 835.5,63.7 836.0,72.6 836.5,67.3 837.0,65.6 837.5,69.7 838.0,63.4 838.5,68.5 839.0,65.5 839.5,62.5 840.0,60.8 840.5,66.3 841.0,65.8 841.5,63.7 842.0,69.6 842.5,71.1 843.0,68.8 843.5,68.1 844.0,71.4 844.5,71.1 845.0,68.6 845.5,72.8 846.0,69.2 846.5,63.7 847.0,54.2 847.5,61.3 848.0,62.5 848.5,55.2 849.0,62.3 849.5,65.3 850.0,61.8 850.5,60.6 851.0,65.9 851.5,68.9 852.0,65.4 852.5,64.4 853.0,68.5 853.5,69.1 854.0,72.2 854.5,67.2 855.0,59.4 855.5,59.8 856.0,65.6 856.5,66.5 857.0,60.4 857.5,68.7 858.0,60.6 858.5,68.9 859.0,72.0 859.5,63.9 860.0,57.8 860.5,63.0 861.0,65.5 861.5,65.7 862.0,64.8 862.5,65.7 863.0,59.8 863.5,59.7 864.0,61.5 864.5,70.5 865.0,68.3 865.5,68.0 866.0,60.8 866.5,66.4 867.0,65.0 867.5,67.0 868.0,64.5 868.5,61.7 869.0,56.4 869.5,60.8 870.0,65.1 870.5,62.4 871.0,57.6 871.5,56.1 872.0,57.1 872.5,61.6 873.0,59.6 873.5,54.3 874.0,60.7 874.5,58.8 875.0,54.1 875.5,52.2 876.0,59.3 876.5,64.4 877.0,54.7 877.5,54.3 878.0,54.4 878.5,51.1 879.0,58.5 879.5,68.3 880.0,68.7 880.5,69.1 881.0,61.8 881.5,56.0 882.0,60.8 882.5,65.2 883.0,66.7 883.5,63.1 884.0,62.2 884.5,68.8 885.0,64.2 885.5,72.4 886.0,73.1 886.5,69.3 887.0,65.9 887.5,63.8 888.0,59.4 888.5,63.6 889.0,70.3 889.5,72.4 890.0,72.3 890.5,71.8 891.0,62.1 891.5,57.4 892.0,65.5 892.5,70.9 893.0,66.2 893.5,65.1 894.0,71.0 894.5,63.0 895.0,63.7 895.5,56.2 896.0,64.7 896.5,65.7 897.0,61.9 897.5,63.6 898.0,64.2 898.5,60.4 899.0,65.8 899.5,67.0 900.0,63.7 900.5,63.2 901.0,61.3 901.5,59.8 902.0,56.5 902.5,63.0 903.0,65.3 903.5,61.8 904.0,59.0 904.5,60.0 905.0,58.8 905.5,52.1 906.0,57.0 906.5,60.4 907.0,58.5 907.5,61.4 908.0,63.0 908.5,63.9 909.0,62.9 909.5,61.4 910.0,62.6 910.5,56.6 911.0,56.8 911.5,52.7 912.0,55.1 912.5,61.8 913.0,66.6 913.5,67.1 914.0,66.0 914.5,57.4 915.0,54.8 915.5,54.9 916.0,55.0 916.5,55.1 917.0,71.1 917.5,56.5 918.0,57.3 918.5,53.1 919.0,58.3 919.5,54.4 920.0,54.9 920.5,59.1 921.0,51.1 921.5,54.3 922.0,63.9 922.5,63.7 923.0,57.3 923.5,58.2 924.0,53.7 924.5,56.1 925.0,57.5 925.5,63.3 926.0,55.6 926.5,58.6 927.0,55.4 927.5,60.4 928.0,59.8 928.5,55.1 929.0,62.5 929.5,63.3 930.0,62.8 930.5,59.1 931.0,62.4 931.5,57.8 932.0,63.4 932.5,63.0 933.0,61.8 933.5,57.5 934.0,59.2 934.5,64.5 935.0,65.1"/>
<g fill="#f00" shape-rendering="crispEdges"><rect x="91" y="46" width="2" height="1"/><rect x="96" y="51" width="2" height="1"/><rect x="102" y="45" width="2" height="1"/><rect x="107" y="45" width="2" height="1"/><rect x="115" y="40" width="2" height="1"/><rect x="121" y="39" width="2" height="1"/><rect x="124" y="35" width="2" height="1"/><rect x="134" y="49" width="2" height="1"/><rect x="137" y="47" width="2" height="1"/><rect x="146" y="55" width="2" height="1"/><rect x="151" y="53" width="2" height="1"/><rect x="155" y="49" width="2" height="1"/><rect x="160" y="51" width="2" height="1"/><rect x="166" y="54" width="2" height="1"/><rect x="174" y="57" width="2" height="1"/><rect x="182" y="51" width="2" height="1"/><rect x="188" y="53" width="2" height="1"/><rect x="194" y="61" width="2" height="1"/><rect x="204" y="56" width="2" height="1"/><rect x="209" y="56" width="2" height="1"/><rect x="214" y="48" width="2" height="1"/><rect x="219" y="55" width="2" height="1"/><rect x="224" y="57" width="2" height="1"/><rect x="234" y="32" width="2" height="1"/><rect x="234" y="37" width="2" height="1"/><rect x="241" y="40" width="2" height="1"/><rect x="248" y="35" width="2" height="1"/><rect x="254" y="32" width="2" height="1"/><rect x="263" y="34" width="2" height="1"/><rect x="268" y="20" width="2" height="1"/><rect x="271" y="32" width="2" height="1"/><rect x="282" y="27" width="2" height="1"/><rect x="286" y="29" width="2" height="1"/><rect x="293" y="43" width="2" height="1"/><rect x="298" y="37" width="2" height="1"/><rect x="300" y="34" width="2" height="1"/><rect x="307" y="25" width="2" height="1"/><rect x="311" y="43" width="2" height="1"/><rect x="322" y="25" width="2" height="1"/><rect x="328" y="25" width="2" height="1"/><rect x="329" y="43" width="2" height="1"/><rect x="339" y="38" width="2" height="1"/><rect x="344" y="25" width="2" height="1"/><rect x="352" y="35" width="2" height="1"/><rect x="356" y="39" width="2" height="1"/><rect x="361" y="37" width="2" height="1"/><rect x="364" y="46" width="2" height="1"/><rect x="374" y="31" width="2" height="1"/><rect x="381" y="16" width="2" height="1"/><rect x="383" y="40" width="2" height="1"/><rect x="393" y="33" width="2" height="1"/><rect x="398" y="24" width="2" height="1"/><rect x="404" y="32" width="2" height="1"/><rect x="408" y="30" width="2" height="1"/><rect x="415" y="30" width="2" height="1"/><rect x="418" y="29" width="2" height="1"/><rect x="422" y="24" width="2" height="1"/><rect x="431" y="27" width="2" height="1"/><rect x="439" y="26" width="2" height="1"/><rect x="445" y="26" width="2" height="1"/><rect x="446" y="24" width="2" height="1"/><rect x="456" y="33" width="2" height="1"/><rect x="460" y="29" width="2" height="1"/><rect x="465" y="30" width="2" height="1"/><rect x="475" y="29" width="2" height="1"/><rect x="477" y="31" width="2" height="1"/><rect x="482" y="29" width="2" height="1"/><rect x="487" y="35" width="2" height="1"/><rect x="495" y="31" width="2" height="1"/><rect x="505" y="31" width="2" height="1"/><rect x="508" y="30" width="2" height="1"/><rect x="516" y="38" width="2" height="1"/><rect x="521" y="29" width="2" height="1"/><rect x="523" y="35" width="2" height="1"/><rect x="533" y="44" width="2" height="1"/><rect x="540" y="43" width="2" height="1"/><rect x="545" y="39" width="2" height="1"/><rect x="549" y="37" width="2" height="1"/><rect x="557" y="46" width="2" height="1"/><rect x="559" y="37" width="2" height="1"/><rect x="565" y="43" width="2" height="1"/><rect x="572" y="50" width="2" height="1"/><rect x="578" y="51" width="2" height="1"/><rect x="582" y="58" width="2" height="1"/><rect x="591" y="52" width="2" height="1"/><rect x="598" y="50" width="2" height="1"/><rect x="603" y="52" width="2" height="1"/><rect x="607" y="57" width="2" height="1"/><rect x="612" y="55" width="2" height="1"/><rect x="617" y="58" width="2" height="1"/><rect x="629" y="59" width="2" height="1"/><rect x="630" y="56" width="2" height="1"/><rect x="639" y="59" width="2" height="1"/><rect x="643" y="59" width="2" height="1"/><rect x="648" y="59" width="2" height="1"/><rect x="656" y="53" width="2" height="1"/><rect x="660" y="55" width="2" height="1"/><rect x="668" y="53" width="2" height="1"/><rect x="673" y="58" width="2" height="1"/><rect x="678" y="57" width="2" height="1"/><rect x="686" y="51" width="2" height="1"/><rect x="688" y="45" width="2" height="1"/><rect x="695" y="48" width="2" height="1"/><rect x="705" y="46" width="2" height="1"/><rect x="706" y="53" width="2" height="1"/><rect x="713" y="51" width="2" height="1"/><rect x="718" y="43" width="2" height="1"/><rect x="725" y="50" width="2" height="1"/><rect x="729" y="51" width="2" height="1"/><rect x="740" y="52" width="2" height="1"/><rect x="745" y="50" width="2" height="1"/><rect x="747" y="51" width="2" height="1"/><rect x="753" y="51" width="2" height="1"/><rect x="760" y="50" width="2" height="1"/><rect x="769" y="47" width="2" height="1"/><rect x="774" y="41" width="2" height="1"/><rect x="775" y="51" width="2" height="1"/><rect x="784" y="47" width="2" height="1"/><rect x="789" y="48" width="2" height="1"/><rect x="795" y="58" width="2" height="1"/><rect x="804" y="56" width="2" height="1"/><rect x="809" y="55" width="2" height="1"/><rect x="817" y="59" width="2" height="1"/><rect x="821" y="58" width="2" height="1"/><rect x="825" y="56" width="2" height="1"/><rect x="830" y="55" width="2" height="1"/><rect x="839" y="55" width="2" height="1"/><rect x="846" y="48" width="2" height="1"/><rect x="846" y="55" width="2" height="1"/><rect x="857" y="52" width="2" height="1"/><rect x="859" y="51" width="2" height="1"/><rect x="869" y="52" width="2" height="1"/><rect x="873" y="46" width="2" height="1"/><rect x="877" y="42" width="2" height="1"/><rect x="881" y="53" width="2" height="1"/><rect x="890" y="51" width="2" height="1"/><rect x="895" y="51" width="2" height="1"/><rect x="904" y="44" width="2" height="1"/><rect x="909" y="43" width="2" height="1"/><rect x="917" y="50" width="2" height="1"/><rect x="919" y="45" width="2" height="1"/><rect x="923" y="42" width="2" height="1"/></g>
<text x="106" y="23" font-size="9.5" fill="#f00" class="r">10 min. peak winds in red</text>
<path fill="none" stroke="#000" stroke-width="1" shape-rendering="crispEdges" transform="translate(0,0.5)" d="M89 123h2M89 123h2M90 122h2M90 122h2M91 125h2M91 126h2M92 123h2M93 122h2M93 122h2M94 124h2M94 124h2M95 122h2M96 128h2M96 125h2M97 126h2M97 124h2M98 130h2M98 125h2M99 125h2M100 127h2M100 128h2M101 126h2M101 126h2M102 133h2M103 124h2M103 125h2M104 125h2M104 126h2M105 124h2M106 125h2M106 123h2M107 124h2M107 126h2M108 126h2M108 128h2M109 125h2M110 129h2M110 123h2M111 125h2M111 126h2M112 125h2M113 128h2M113 124h2M114 125h2M114 124h2M115 123h2M116 124h2M116 124h2M117 125h2M117 125h2M118 123h2M118 123h2M119 125h2M120 125h2M120 124h2M121 125h2M121 125h2M122 125h2M123 126h2M123 125h2M124 127h2M124 126h2M125 134h2M126 126h2M126 127h2M127 127h2M127 132h2M128 128h2M128 130h2M129 127h2M130 131h2M130 126h2M131 128h2M131 128h2M132 131h2M133 129h2M133 128h2M134 135h2M134 127h2M135 130h2M136 129h2M136 128h2M137 126h2M137 126h2M138 124h2M138 124h2M139 128h2M140 130h2M140 130h2M141 125h2M141 126h2M142 131h2M143 127h2M143 126h2M144 127h2M144 125h2M145 126h2M146 126h2M146 125h2M147 126h2M147 128h2M148 126h2M148 127h2M149 125h2M150 126h2M150 130h2M151 127h2M151 128h2M152 127h2M153 127h2M153 129h2M154 127h2M154 130h2M155 126h2M156 125h2M156 128h2M157 131h2M157 131h2M158 124h2M158 127h2M159 128h2M160 129h2M160 128h2M161 131h2M161 132h2M162 133h2M163 132h2M163 131h2M164 130h2M164 129h2M165 130h2M166 134h2M166 129h2M167 129h2M167 128h2M168 134h2M168 136h2M169 128h2M170 134h2M170 129h2M171 128h2M171 128h2M172 130h2M173 129h2M173 129h2M174 130h2M174 127h2M175 136h2M176 131h2M176 128h2M177 130h2M177 128h2M178 127h2M178 128h2M179 130h2M180 129h2M180 130h2M181 129h2M181 134h2M182 131h2M183 132h2M183 130h2M184 130h2M184 131h2M185 129h2M186 128h2M186 135h2M187 129h2M187 135h2M188 126h2M188 131h2M189 129h2M190 131h2M190 128h2M191 126h2M191 127h2M192 126h2M193 127h2M193 126h2M194 133h2M194 129h2M195 127h2M196 127h2M196 127h2M197 131h2M197 128h2M198 130h2M198 128h2M199 128h2M200 127h2M200 133h2M201 130h2M201 127h2M202 131h2M203 128h2M203 134h2M204 129h2M204 129h2M205 131h2M206 130h2M206 129h2M207 140h2M207 133h2M208 131h2M208 131h2M209 128h2M210 130h2M210 130h2M211 129h2M211 129h2M212 129h2M213 130h2M213 131h2M214 129h2M214 135h2M215 131h2M216 134h2M216 131h2M217 134h2M217 130h2M218 129h2M218 131h2M219 131h2M220 132h2M220 132h2M221 131h2M221 129h2M222 129h2M223 131h2M223 130h2M224 127h2M224 127h2M225 127h2M226 128h2M226 128h2M227 129h2M227 128h2M228 129h2M228 129h2M229 128h2M230 127h2M230 129h2M231 132h2M231 132h2M232 130h2M233 129h2M233 131h2M234 129h2M234 130h2M235 129h2M235 129h2M236 127h2M237 126h2M237 127h2M238 130h2M238 128h2M239 137h2M240 131h2M240 129h2M241 132h2M241 135h2M242 128h2M243 129h2M243 129h2M244 133h2M244 129h2M245 130h2M245 130h2M246 132h2M247 126h2M247 130h2M248 126h2M248 128h2M249 128h2M250 127h2M250 130h2M251 130h2M251 130h2M252 128h2M253 131h2M253 126h2M254 131h2M254 130h2M255 129h2M255 131h2M256 128h2M257 128h2M257 131h2M258 135h2M258 130h2M259 134h2M260 130h2M260 133h2M261 127h2M261 130h2M262 129h2M263 130h2M263 134h2M264 129h2M264 136h2M265 127h2M265 129h2M266 130h2M267 132h2M267 129h2M268 131h2M268 130h2M269 129h2M270 129h2M270 131h2M271 135h2M271 132h2M272 129h2M273 131h2M273 127h2M274 130h2M274 129h2M275 130h2M275 126h2M276 129h2M277 130h2M277 130h2M278 129h2M278 128h2M279 132h2M280 135h2M280 133h2M281 127h2M281 131h2M282 128h2M283 131h2M283 133h2M284 131h2M284 127h2M285 129h2M285 135h2M286 135h2M287 129h2M287 130h2M288 138h2M288 132h2M289 134h2M290 132h2M290 132h2M291 132h2M291 130h2M292 131h2M293 131h2M293 133h2M294 133h2M294 134h2M295 133h2M295 132h2M296 131h2M297 131h2M297 135h2M298 132h2M298 133h2M299 133h2M300 133h2M300 133h2M301 134h2M301 134h2M302 131h2M303 133h2M303 133h2M304 136h2M304 131h2M305 130h2M305 132h2M306 134h2M307 133h2M307 132h2M308 132h2M308 134h2M309 134h2M310 138h2M310 137h2M311 132h2M311 138h2M312 135h2M313 132h2M313 132h2M314 138h2M314 134h2M315 136h2M315 133h2M316 135h2M317 133h2M317 132h2M318 137h2M318 133h2M319 132h2M320 136h2M320 134h2M321 132h2M321 134h2M322 137h2M323 136h2M323 138h2M324 133h2M324 134h2M325 132h2M325 133h2M326 132h2M327 133h2M327 134h2M328 138h2M328 135h2M329 135h2M330 134h2M330 139h2M331 134h2M331 137h2M332 142h2M333 131h2M333 135h2M334 134h2M334 137h2M335 134h2M335 137h2M336 134h2M337 135h2M337 137h2M338 136h2M338 134h2M339 135h2M340 134h2M340 134h2M341 133h2M341 135h2M342 135h2M343 134h2M343 138h2M344 135h2M344 135h2M345 138h2M345 136h2M346 135h2M347 131h2M347 140h2M348 135h2M348 131h2M349 134h2M350 132h2M350 134h2M351 132h2M351 135h2M352 135h2M353 135h2M353 134h2M354 139h2M354 137h2M355 134h2M355 132h2M356 133h2M357 133h2M357 133h2M358 133h2M358 132h2M359 131h2M360 141h2M360 142h2M361 130h2M361 133h2M362 131h2M363 138h2M363 134h2M364 132h2M364 138h2M365 133h2M365 132h2M366 135h2M367 139h2M367 134h2M368 133h2M368 135h2M369 137h2M370 133h2M370 133h2M371 132h2M371 138h2M372 132h2M373 131h2M373 132h2M374 130h2M374 135h2M375 136h2M375 137h2M376 137h2M377 132h2M377 133h2M378 133h2M378 132h2M379 131h2M380 129h2M380 130h2M381 131h2M381 130h2M382 130h2M383 134h2M383 130h2M384 132h2M384 130h2M385 132h2M385 132h2M386 130h2M387 135h2M387 128h2M388 130h2M388 129h2M389 129h2M390 129h2M390 137h2M391 131h2M391 132h2M392 133h2M392 131h2M393 135h2M394 136h2M394 133h2M395 133h2M395 130h2M396 141h2M397 131h2M397 131h2M398 130h2M398 130h2M399 128h2M400 131h2M400 134h2M401 129h2M401 129h2M402 129h2M402 129h2M403 131h2M404 129h2M404 133h2M405 129h2M405 130h2M406 129h2M407 134h2M407 131h2M408 131h2M408 130h2M409 129h2M410 129h2M410 127h2M411 134h2M411 132h2M412 133h2M412 133h2M413 129h2M414 130h2M414 134h2M415 130h2M415 137h2M416 139h2M417 132h2M417 132h2M418 136h2M418 135h2M419 131h2M420 130h2M420 130h2M421 128h2M421 128h2M422 134h2M422 129h2M423 132h2M424 132h2M424 130h2M425 132h2M425 129h2M426 130h2M427 129h2M427 129h2M428 128h2M428 128h2M429 128h2M430 131h2M430 130h2M431 132h2M431 132h2M432 129h2M432 134h2M433 128h2M434 129h2M434 129h2M435 129h2M435 127h2M436 130h2M437 133h2M437 129h2M438 135h2M438 129h2M439 130h2M440 128h2M440 131h2M441 128h2M441 130h2M442 127h2M442 128h2M443 129h2M444 128h2M444 128h2M445 128h2M445 129h2M446 128h2M447 126h2M447 127h2M448 127h2M448 127h2M449 129h2M450 129h2M450 129h2M451 132h2M451 129h2M452 132h2M452 133h2M453 131h2M454 136h2M454 132h2M455 134h2M455 138h2M456 130h2M457 130h2M457 133h2M458 133h2M458 129h2M459 128h2M460 130h2M460 134h2M461 130h2M461 131h2M462 128h2M462 129h2M463 131h2M464 132h2M464 133h2M465 134h2M465 130h2M466 130h2M467 131h2M467 130h2M468 132h2M468 130h2M469 129h2M470 131h2M470 128h2M471 136h2M471 128h2M472 125h2M472 127h2M473 125h2M474 130h2M474 133h2M475 132h2M475 126h2M476 129h2M477 130h2M477 127h2M478 128h2M478 132h2M479 128h2M480 126h2M480 125h2M481 127h2M481 127h2M482 126h2M482 126h2M483 131h2M484 125h2M484 130h2M485 128h2M485 133h2M486 133h2M487 127h2M487 132h2M488 128h2M488 132h2M489 131h2M490 131h2M490 129h2M491 130h2M491 132h2M492 131h2M492 131h2M493 131h2M494 130h2M494 131h2M495 129h2M495 128h2M496 129h2M497 133h2M497 129h2M498 134h2M498 134h2M499 131h2M500 132h2M500 135h2M501 130h2M501 133h2M502 133h2M502 134h2M503 131h2M504 139h2M504 129h2M505 131h2M505 130h2M506 129h2M507 133h2M507 133h2M508 128h2M508 129h2M509 131h2M510 128h2M510 129h2M511 135h2M511 129h2M512 134h2M512 129h2M513 131h2M514 134h2M514 131h2M515 131h2M515 130h2M516 129h2M517 130h2M517 129h2M518 130h2M518 132h2M519 133h2M520 132h2M520 137h2M521 131h2M521 131h2M522 130h2M522 133h2M523 136h2M524 132h2M524 134h2M525 129h2M525 130h2M526 131h2M527 131h2M527 130h2M528 128h2M528 131h2M529 130h2M530 127h2M530 127h2M531 128h2M531 128h2M532 129h2M532 130h2M533 128h2M534 128h2M534 127h2M535 128h2M535 127h2M536 127h2M537 128h2M537 127h2M538 125h2M538 125h2M539 126h2M539 128h2M540 131h2M541 126h2M541 127h2M542 127h2M542 127h2M543 127h2M544 127h2M544 128h2M545 124h2M545 128h2M546 127h2M547 126h2M547 132h2M548 131h2M548 130h2M549 130h2M549 130h2M550 131h2M551 129h2M551 128h2M552 131h2M552 129h2M553 128h2M554 129h2M554 131h2M555 130h2M555 133h2M556 130h2M557 128h2M557 128h2M558 131h2M558 131h2M559 131h2M559 130h2M560 131h2M561 129h2M561 131h2M562 130h2M562 134h2M563 128h2M564 130h2M564 130h2M565 132h2M565 132h2M566 128h2M567 129h2M567 131h2M568 131h2M568 129h2M569 132h2M569 127h2M570 128h2M571 130h2M571 127h2M572 128h2M572 129h2M573 127h2M574 127h2M574 129h2M575 129h2M575 131h2M576 128h2M577 128h2M577 127h2M578 131h2M578 130h2M579 135h2M579 130h2M580 130h2M581 130h2M581 127h2M582 132h2M582 132h2M583 131h2M584 130h2M584 129h2M585 131h2M585 128h2M586 130h2M587 127h2M587 128h2M588 128h2M588 128h2M589 129h2M589 125h2M590 125h2M591 125h2M591 129h2M592 125h2M592 126h2M593 128h2M594 127h2M594 127h2M595 128h2M595 129h2M596 130h2M597 126h2M597 127h2M598 124h2M598 126h2M599 124h2M599 125h2M600 126h2M601 126h2M601 123h2M602 128h2M602 125h2M603 130h2M604 124h2M604 130h2M605 128h2M605 128h2M606 128h2M607 130h2M607 131h2M608 128h2M608 129h2M609 130h2M609 131h2M610 132h2M611 128h2M611 128h2M612 130h2M612 130h2M613 134h2M614 138h2M614 127h2M615 130h2M615 131h2M616 130h2M617 132h2M617 130h2M618 132h2M618 130h2M619 132h2M619 130h2M620 128h2M621 132h2M621 131h2M622 132h2M622 128h2M623 129h2M624 134h2M624 130h2M625 131h2M625 127h2M626 128h2M627 128h2M627 130h2M628 131h2M628 129h2M629 132h2M629 131h2M630 130h2M631 128h2M631 129h2M632 130h2M632 128h2M633 128h2M634 127h2M634 130h2M635 130h2M635 129h2M636 126h2M637 129h2M637 129h2M638 129h2M638 129h2M639 132h2M639 129h2M640 128h2M641 131h2M641 133h2M642 134h2M642 128h2M643 128h2M644 130h2M644 127h2M645 130h2M645 126h2M646 128h2M647 126h2M647 126h2M648 129h2M648 127h2M649 125h2M649 126h2M650 128h2M651 128h2M651 128h2M652 126h2M652 128h2M653 127h2M654 126h2M654 129h2M655 133h2M655 128h2M656 128h2M657 127h2M657 130h2M658 132h2M658 129h2M659 128h2M659 128h2M660 129h2M661 130h2M661 128h2M662 130h2M662 130h2M663 128h2M664 128h2M664 130h2M665 127h2M665 127h2M666 126h2M667 127h2M667 127h2M668 124h2M668 127h2M669 126h2M669 126h2M670 126h2M671 125h2M671 127h2M672 127h2M672 133h2M673 127h2M674 129h2M674 136h2M675 128h2M675 129h2M676 131h2M676 134h2M677 129h2M678 132h2M678 131h2M679 135h2M679 129h2M680 132h2M681 132h2M681 135h2M682 130h2M682 131h2M683 129h2M684 129h2M684 130h2M685 133h2M685 134h2M686 130h2M686 133h2M687 129h2M688 132h2M688 132h2M689 130h2M689 136h2M690 131h2M691 129h2M691 129h2M692 129h2M692 135h2M693 130h2M694 130h2M694 132h2M695 132h2M695 128h2M696 136h2M696 127h2M697 130h2M698 131h2M698 129h2M699 133h2M699 135h2M700 133h2M701 128h2M701 128h2M702 126h2M702 138h2M703 132h2M704 132h2M704 136h2M705 127h2M705 125h2M706 128h2M706 135h2M707 130h2M708 128h2M708 131h2M709 138h2M709 128h2M710 129h2M711 138h2M711 139h2M712 134h2M712 132h2M713 128h2M714 128h2M714 129h2M715 130h2M715 129h2M716 127h2M716 127h2M717 126h2M718 128h2M718 127h2M719 129h2M719 128h2M720 128h2M721 129h2M721 131h2M722 129h2M722 127h2M723 127h2M724 138h2M724 130h2M725 128h2M725 129h2M726 129h2M726 127h2M727 128h2M728 126h2M728 130h2M729 134h2M729 130h2M730 128h2M731 134h2M731 127h2M732 129h2M732 127h2M733 137h2M734 128h2M734 130h2M735 138h2M735 128h2M736 134h2M736 130h2M737 132h2M738 130h2M738 127h2M739 136h2M739 134h2M740 138h2M741 134h2M741 130h2M742 132h2M742 138h2M743 131h2M744 133h2M744 141h2M745 130h2M745 130h2M746 131h2M746 130h2M747 132h2M748 131h2M748 133h2M749 132h2M749 134h2M750 139h2M751 129h2M751 129h2M752 127h2M752 132h2M753 135h2M754 126h2M754 129h2M755 135h2M755 129h2M756 128h2M756 127h2M757 127h2M758 128h2M758 127h2M759 127h2M759 127h2M760 127h2M761 128h2M761 127h2M762 132h2M762 129h2M763 133h2M764 141h2M764 135h2M765 132h2M765 133h2M766 129h2M766 132h2M767 137h2M768 131h2M768 134h2M769 141h2M769 136h2M770 131h2M771 137h2M771 131h2M772 129h2M772 131h2M773 128h2M774 131h2M774 131h2M775 128h2M775 128h2M776 132h2M776 127h2M777 134h2M778 127h2M778 125h2M779 131h2M779 136h2M780 128h2M781 129h2M781 129h2M782 138h2M782 129h2M783 130h2M784 128h2M784 132h2M785 130h2M785 131h2M786 126h2M786 130h2M787 131h2M788 129h2M788 130h2M789 131h2M789 136h2M790 134h2M791 128h2M791 129h2M792 130h2M792 129h2M793 131h2M794 128h2M794 131h2M795 130h2M795 129h2M796 132h2M796 135h2M797 131h2M798 132h2M798 128h2M799 132h2M799 130h2M800 133h2M801 131h2M801 132h2M802 131h2M802 134h2M803 131h2M804 131h2M804 130h2M805 128h2M805 133h2M806 132h2M806 129h2M807 130h2M808 127h2M808 128h2M809 136h2M809 133h2M810 133h2M811 130h2M811 129h2M812 131h2M812 133h2M813 128h2M814 128h2M814 130h2M815 129h2M815 130h2M816 130h2M816 127h2M817 129h2M818 128h2M818 130h2M819 128h2M819 131h2M820 131h2M821 136h2M821 132h2M822 140h2M822 131h2M823 133h2M823 132h2M824 134h2M825 135h2M825 130h2M826 133h2M826 130h2M827 131h2M828 136h2M828 130h2M829 131h2M829 135h2M830 131h2M831 133h2M831 131h2M832 139h2M832 132h2M833 131h2M833 138h2M834 131h2M835 131h2M835 131h2M836 132h2M836 133h2M837 132h2M838 133h2M838 135h2M839 130h2M839 130h2M840 128h2M841 131h2M841 132h2M842 135h2M842 132h2M843 128h2M843 129h2M844 130h2M845 130h2M845 127h2M846 128h2M846 130h2M847 128h2M848 129h2M848 129h2M849 133h2M849 135h2M850 135h2M851 133h2M851 133h2M852 141h2M852 132h2M853 133h2M853 129h2M854 137h2M855 130h2M855 129h2M856 131h2M856 130h2M857 129h2M858 127h2M858 132h2M859 128h2M859 127h2M860 128h2M861 129h2M861 128h2M862 134h2M862 138h2M863 130h2M863 134h2M864 131h2M865 130h2M865 137h2M866 137h2M866 131h2M867 130h2M868 130h2M868 134h2M869 133h2M869 137h2M870 134h2M871 129h2M871 136h2M872 129h2M872 129h2M873 131h2M873 131h2M874 135h2M875 128h2M875 133h2M876 131h2M876 139h2M877 129h2M878 132h2M878 132h2M879 129h2M879 128h2M880 128h2M881 130h2M881 129h2M882 129h2M882 129h2M883 128h2M883 132h2M884 139h2M885 127h2M885 136h2M886 134h2M886 136h2M887 130h2M888 134h2M888 129h2M889 129h2M889 130h2M890 131h2M891 137h2M891 130h2M892 128h2M892 130h2M893 129h2M893 128h2M894 127h2M895 129h2M895 128h2M896 129h2M896 131h2M897 132h2M898 129h2M898 132h2M899 129h2M899 132h2M900 125h2M901 127h2M901 136h2M902 125h2M902 125h2M903 131h2M903 131h2M904 128h2M905 129h2M905 137h2M906 132h2M906 130h2M907 131h2M908 137h2M908 131h2M909 137h2M909 130h2M910 131h2M911 130h2M911 129h2M912 131h2M912 129h2M913 130h2M913 132h2M914 128h2M915 127h2M915 128h2M916 128h2M916 127h2M917 127h2M918 128h2M918 129h2M919 128h2M919 130h2M920 130h2M921 129h2M921 129h2M922 131h2M922 129h2M923 131h2M923 130h2M924 127h2M925 130h2M925 128h2M926 132h2M926 127h2M927 128h2M928 128h2M928 129h2M929 130h2M929 131h2M930 133h2M931 132h2M931 131h2M932 130h2M932 132h2M933 129h2M933 127h2"/>
<polyline fill="none" stroke="#222" stroke-width="1" points="89.0,181.71 89.8,181.98 90.6,182.39 91.4,182.65 92.2,183.07 93.0,183.53 93.8,183.67 94.6,183.99 95.4,184.43 96.2,184.69 97.0,184.70 97.8,184.92 98.6,185.24 99.4,185.31 100.2,185.45 101.0,185.72 101.8,185.87 102.6,186.03 103.4,185.96 104.2,186.05 105.0,186.27 105.8,186.26 106.6,186.29 107.4,186.95 108.2,187.22 109.0,187.70 109.8,188.33 110.6,188.59 111.4,188.83 112.2,189.20 113.0,189.55 113.8,189.63 114.6,189.91 115.4,190.01 116.2,190.44 117.0,190.59 117.8,190.88 118.6,190.91 119.4,191.31 120.2,191.52 121.0,192.03 121.8,192.50 122.6,193.06 123.4,193.97 124.2,194.98 125.0,195.70 125.8,196.42 126.6,196.78 127.4,197.13 128.2,197.42 129.0,197.98 129.8,198.26 130.6,198.73 131.4,199.01 132.2,199.40 133.0,199.53 133.8,199.57 134.6,199.78 135.4,199.66 136.2,199.86 137.0,199.86 137.8,200.16 138.6,200.17 139.4,200.20 140.2,200.48 141.0,200.48 141.8,200.65 142.6,200.89 143.4,200.80 144.2,201.07 145.0,201.23 145.8,201.34 146.6,201.53 147.4,201.57 148.2,201.73 149.0,201.66 149.8,201.70 150.6,201.95 151.4,201.88 152.2,201.94 153.0,202.02 153.8,202.22 154.6,202.18 155.4,202.25 156.2,202.37 157.0,202.34 157.8,202.47 158.6,202.45 159.4,202.69 160.2,202.73 161.0,202.66 161.8,202.80 162.6,202.77 163.4,202.90 164.2,203.14 165.0,203.14 165.8,203.23 166.6,203.31 167.4,203.59 168.2,203.63 169.0,203.63 169.8,203.72 170.6,203.91 171.4,204.21 172.2,204.21 173.0,204.28 173.8,204.36 174.6,204.48 175.4,204.76 176.2,204.86 177.0,204.94 177.8,204.90 178.6,205.04 179.4,204.92 180.2,204.91 181.0,205.13 181.8,205.24 182.6,205.12 183.4,205.32 184.2,205.26 185.0,205.23 185.8,205.24 186.6,205.44 187.4,205.56 188.2,205.70 189.0,205.86 189.8,205.69 190.6,205.91 191.4,205.96 192.2,205.95 193.0,205.90 193.8,206.01 194.6,206.14 195.4,206.26 196.2,206.10 197.0,206.37 197.8,206.26 198.6,206.40 199.4,206.54 200.2,206.53 201.0,206.59 201.8,206.60 202.6,206.70 203.4,206.61 204.2,206.70 205.0,206.68 205.8,206.71 206.6,206.72 207.4,206.66 208.2,206.77 209.0,206.72 209.8,206.78 210.6,206.77 211.4,206.88 212.2,206.83 213.0,207.08 213.8,207.01 214.6,206.93 215.4,207.02 216.2,206.93 217.0,206.94 217.8,207.08 218.6,207.10 219.4,207.09 220.2,206.88 221.0,206.75 221.8,206.80 222.6,206.92 223.4,206.83 224.2,206.76 225.0,206.72 225.8,206.81 226.6,206.68 227.4,206.52 228.2,206.50 229.0,206.46 229.8,206.36 230.6,206.48 231.4,206.36 232.2,206.40 233.0,206.56 233.8,206.75 234.6,207.08 235.4,207.38 236.2,207.62 237.0,207.99 237.8,208.42 238.6,208.72 239.4,209.11 240.2,209.58 241.0,209.92 241.8,210.20 242.6,210.65 243.4,211.02 244.2,211.42 245.0,211.84 245.8,212.32 246.6,212.53 247.4,212.75 248.2,212.78 249.0,213.02 249.8,213.03 250.6,212.97 251.4,213.21 252.2,213.24 253.0,213.31 253.8,213.41 254.6,213.47 255.4,213.51 256.2,213.60 257.0,213.68 257.8,213.69 258.6,213.52 259.4,213.52 260.2,213.64 261.0,213.96 261.8,213.96 262.6,214.24 263.4,214.39 264.2,214.42 265.0,214.43 265.8,214.50 266.6,214.86 267.4,214.80 268.2,215.02 269.0,215.04 269.8,215.30 270.6,215.35 271.4,215.60 272.2,215.64 273.0,215.86 273.8,216.05 274.6,216.17 275.4,216.26 276.2,216.24 277.0,216.48 277.8,216.65 278.6,216.83 279.4,216.90 280.2,217.24 281.0,217.34 281.8,217.53 282.6,217.73 283.4,217.87 284.2,217.98 285.0,217.92 285.8,218.18 286.6,218.43 287.4,218.51 288.2,218.75 289.0,218.90 289.8,218.88 290.6,219.00 291.4,219.20 292.2,219.19 293.0,219.36 293.8,219.26 294.6,219.51 295.4,219.54 296.2,219.72 297.0,219.63 297.8,219.59 298.6,219.84 299.4,219.92 300.2,219.92 301.0,219.91 301.8,220.14 302.6,220.17 303.4,220.19 304.2,220.09 305.0,220.17 305.8,220.37 306.6,220.27 307.4,220.53 308.2,220.56 309.0,220.55 309.8,220.58 310.6,220.70 311.4,220.93 312.2,220.88 313.0,221.17 313.8,221.22 314.6,221.38 315.4,221.42 316.2,221.56 317.0,221.70 317.8,221.72 318.6,221.92 319.4,221.82 320.2,222.03 321.0,222.22 321.8,222.36 322.6,222.38 323.4,222.47 324.2,222.53 325.0,222.51 325.8,222.52 326.6,222.32 327.4,222.30 328.2,222.27 329.0,222.10 329.8,222.07 330.6,221.94 331.4,222.06 332.2,222.01 333.0,221.91 333.8,221.78 334.6,221.80 335.4,221.74 336.2,221.54 337.0,221.48 337.8,221.39 338.6,221.48 339.4,221.29 340.2,221.36 341.0,221.23 341.8,221.24 342.6,221.10 343.4,221.13 344.2,221.25 345.0,221.42 345.8,221.27 346.6,221.37 347.4,221.47 348.2,221.47 349.0,221.41 349.8,221.41 350.6,221.65 351.4,221.68 352.2,221.73 353.0,221.88 353.8,222.03 354.6,221.93 355.4,222.07 356.2,222.22 357.0,222.33 357.8,222.22 358.6,222.50 359.4,222.66 360.2,222.61 361.0,222.52 361.8,222.55 362.6,222.63 363.4,222.82 364.2,223.03 365.0,223.05 365.8,223.08 366.6,223.11 367.4,223.36 368.2,223.31 369.0,223.26 369.8,223.29 370.6,223.40 371.4,223.44 372.2,223.43 373.0,223.59 373.8,223.52 374.6,223.69 375.4,223.67 376.2,223.57 377.0,223.79 377.8,223.84 378.6,223.81 379.4,223.87 380.2,223.87 381.0,223.87 381.8,224.02 382.6,223.98 383.4,224.04 384.2,224.17 385.0,224.23 385.8,224.49 386.6,224.40 387.4,224.43 388.2,224.58 389.0,224.88 389.8,224.96 390.6,225.01 391.4,225.16 392.2,225.26 393.0,225.23 393.8,225.32 394.6,225.32 395.4,225.48 396.2,225.76 397.0,225.73 397.8,225.94 398.6,226.09 399.4,226.25 400.2,226.12 401.0,226.15 401.8,226.08 402.6,226.35 403.4,226.21 404.2,226.26 405.0,226.26 405.8,226.53 406.6,226.58 407.4,226.65 408.2,226.67 409.0,226.72 409.8,226.80 410.6,226.70 411.4,226.87 412.2,227.01 413.0,226.84 413.8,226.84 414.6,226.83 415.4,227.09 416.2,227.16 417.0,227.06 417.8,227.25 418.6,227.10 419.4,227.37 420.2,227.21 421.0,227.13 421.8,227.05 422.6,227.18 423.4,227.02 424.2,227.10 425.0,227.00 425.8,227.11 426.6,226.86 427.4,226.85 428.2,226.99 429.0,226.97 429.8,226.72 430.6,226.77 431.4,226.63 432.2,226.75 433.0,226.83 433.8,226.64 434.6,226.66 435.4,226.67 436.2,226.61 437.0,226.43 437.8,226.41 438.6,226.62 439.4,226.65 440.2,226.72 441.0,226.59 441.8,226.69 442.6,226.86 443.4,226.66 444.2,226.69 445.0,226.79 445.8,226.80 446.6,226.86 447.4,226.81 448.2,227.00 449.0,227.02 449.8,227.13 450.6,226.97 451.4,227.03 452.2,227.23 453.0,227.25 453.8,227.19 454.6,227.35 455.4,227.41 456.2,227.22 457.0,227.28 457.8,227.23 458.6,227.41 459.4,227.25 460.2,227.48 461.0,227.54 461.8,227.41 462.6,227.53 463.4,227.45 464.2,227.53 465.0,227.45 465.8,227.48 466.6,227.48 467.4,227.74 468.2,227.70 469.0,227.85 469.8,227.85 470.6,227.81 471.4,227.70 472.2,227.91 473.0,227.75 473.8,227.77 474.6,227.99 475.4,227.91 476.2,227.87 477.0,227.99 477.8,228.06 478.6,228.10 479.4,228.20 480.2,228.05 481.0,228.16 481.8,228.08 482.6,228.30 483.4,228.18 484.2,228.31 485.0,228.36 485.8,228.33 486.6,228.44 487.4,228.50 488.2,228.32 489.0,228.31 489.8,228.48 490.6,228.35 491.4,228.25 492.2,228.50 493.0,228.39 493.8,228.55 494.6,228.42 495.4,228.52 496.2,228.37 497.0,228.56 497.8,228.65 498.6,228.60 499.4,228.69 500.2,228.65 501.0,228.68 501.8,228.64 502.6,228.63 503.4,228.72 504.2,228.58 505.0,228.75 505.8,228.60 506.6,228.62 507.4,228.83 508.2,228.66 509.0,228.69 509.8,228.81 510.6,228.87 511.4,228.69 512.2,228.65 513.0,228.68 513.8,228.97 514.6,228.86 515.4,229.09 516.2,229.06 517.0,229.01 517.8,228.99 518.6,229.10 519.4,229.06 520.2,229.07 521.0,229.06 521.8,229.24 522.6,229.37 523.4,229.46 524.2,229.51 525.0,229.49 525.8,229.36 526.6,229.50 527.4,229.56 528.2,229.44 529.0,229.55 529.8,229.56 530.6,229.67 531.4,229.86 532.2,229.74 533.0,229.66 533.8,229.80 534.6,229.95 535.4,229.90 536.2,229.99 537.0,229.90 537.8,230.00 538.6,230.19 539.4,230.07 540.2,230.05 541.0,230.29 541.8,230.32 542.6,230.27 543.4,230.32 544.2,230.25 545.0,230.27 545.8,230.51 546.6,230.47 547.4,230.48 548.2,230.61 549.0,230.80 549.8,230.69 550.6,230.87 551.4,230.72 552.2,230.93 553.0,231.05 553.8,230.84 554.6,230.87 555.4,231.07 556.2,231.16 557.0,230.93 557.8,231.04 558.6,231.16 559.4,230.96 560.2,230.97 561.0,231.13 561.8,231.09 562.6,231.10 563.4,231.02 564.2,231.02 565.0,231.15 565.8,231.24 566.6,231.25 567.4,231.44 568.2,231.32 569.0,231.27 569.8,231.26 570.6,231.31 571.4,231.47 572.2,231.58 573.0,231.64 573.8,231.68 574.6,231.60 575.4,231.47 576.2,231.55 577.0,231.64 577.8,231.73 578.6,231.63 579.4,231.63 580.2,231.62 581.0,231.70 581.8,231.77 582.6,231.82 583.4,231.84 584.2,231.74 585.0,231.58 585.8,231.80 586.6,231.68 587.4,231.84 588.2,231.77 589.0,231.92 589.8,231.77 590.6,231.88 591.4,231.75 592.2,231.94 593.0,231.90 593.8,231.87 594.6,231.90 595.4,231.78 596.2,231.94 597.0,231.84 597.8,231.97 598.6,231.95 599.4,231.80 600.2,231.87 601.0,231.78 601.8,231.72 602.6,231.60 603.4,231.60 604.2,231.71 605.0,231.75 605.8,231.58 606.6,231.77 607.4,231.81 608.2,231.75 609.0,231.77 609.8,231.61 610.6,231.69 611.4,231.54 612.2,231.58 613.0,231.47 613.8,231.46 614.6,231.58 615.4,231.54 616.2,231.53 617.0,231.26 617.8,231.31 618.6,231.14 619.4,231.14 620.2,231.00 621.0,230.92 621.8,230.75 622.6,230.85 623.4,230.76 624.2,230.52 625.0,230.41 625.8,230.34 626.6,230.28 627.4,230.39 628.2,230.34 629.0,230.13 629.8,230.13 630.6,230.03 631.4,229.78 632.2,229.81 633.0,229.75 633.8,229.72 634.6,229.60 635.4,229.37 636.2,229.43 637.0,229.29 637.8,229.27 638.6,229.21 639.4,229.24 640.2,229.04 641.0,228.88 641.8,228.80 642.6,228.67 643.4,228.76 644.2,228.73 645.0,228.52 645.8,228.49 646.6,228.35 647.4,228.45 648.2,228.15 649.0,228.15 649.8,227.91 650.6,227.69 651.4,227.63 652.2,227.55 653.0,227.26 653.8,227.23 654.6,227.09 655.4,226.84 656.2,226.57 657.0,226.46 657.8,226.31 658.6,226.28 659.4,226.08 660.2,225.76 661.0,225.56 661.8,225.56 662.6,225.52 663.4,225.34 664.2,224.94 665.0,224.75 665.8,224.66 666.6,224.59 667.4,224.54 668.2,224.21 669.0,224.05 669.8,224.01 670.6,223.84 671.4,223.47 672.2,223.18 673.0,223.23 673.8,223.12 674.6,222.67 675.4,222.67 676.2,222.31 677.0,222.22 677.8,221.93 678.6,221.67 679.4,221.47 680.2,221.34 681.0,221.16 681.8,221.19 682.6,221.00 683.4,221.00 684.2,220.89 685.0,220.59 685.8,220.39 686.6,220.26 687.4,220.19 688.2,220.13 689.0,219.82 689.8,219.84 690.6,219.69 691.4,219.48 692.2,219.27 693.0,219.20 693.8,219.03 694.6,219.02 695.4,218.86 696.2,218.78 697.0,218.54 697.8,218.42 698.6,218.40 699.4,218.28 700.2,218.04 701.0,218.27 701.8,218.35 702.6,218.05 703.4,217.52 704.2,217.83 705.0,217.27 705.8,217.14 706.6,216.69 707.4,216.87 708.2,217.30 709.0,217.25 709.8,216.65 710.6,216.40 711.4,216.41 712.2,216.23 713.0,216.51 713.8,216.08 714.6,216.69 715.4,216.76 716.2,216.84 717.0,217.10 717.8,216.59 718.6,215.96 719.4,216.76 720.2,216.57 721.0,216.48 721.8,215.81 722.6,216.02 723.4,215.54 724.2,216.14 725.0,216.03 725.8,216.38 726.6,215.45 727.4,216.08 728.2,215.69 729.0,215.16 729.8,215.92 730.6,215.27 731.4,215.05 732.2,214.81 733.0,215.30 733.8,214.52 734.6,213.97 735.4,213.47 736.2,213.14 737.0,213.35 737.8,213.05 738.6,213.21 739.4,213.06 740.2,212.95 741.0,213.66 741.8,213.93 742.6,213.30 743.4,213.95 744.2,213.78 745.0,213.45 745.8,213.38 746.6,213.60 747.4,213.90 748.2,214.74 749.0,214.67 749.8,214.56 750.6,213.66 751.4,213.53 752.2,213.91 753.0,213.59 753.8,213.91 754.6,213.10 755.4,213.79 756.2,213.58 757.0,213.61 757.8,212.22 758.6,210.99 759.4,210.33 760.2,208.56 761.0,208.80 761.8,209.62 762.6,209.74 763.4,210.43 764.2,210.79 765.0,210.66 765.8,210.95 766.6,210.84 767.4,210.66 768.2,210.49 769.0,210.29 769.8,210.31 770.6,211.27 771.4,210.77 772.2,211.08 773.0,211.40 773.8,210.88 774.6,210.63 775.4,211.38 776.2,210.94 777.0,210.53 777.8,211.16 778.6,211.67 779.4,210.88 780.2,210.75 781.0,210.62 781.8,211.53 782.6,210.85 783.4,210.38 784.2,209.81 785.0,209.57 785.8,209.75 786.6,209.27 787.4,209.25 788.2,208.81 789.0,208.46 789.8,208.42 790.6,208.68 791.4,207.99 792.2,208.31 793.0,208.53 793.8,208.42 794.6,207.96 795.4,208.30 796.2,208.53 797.0,208.90 797.8,207.92 798.6,208.02 799.4,207.72 800.2,207.74 801.0,207.67 801.8,207.74 802.6,208.00 803.4,207.87 804.2,207.32 805.0,207.10 805.8,207.65 806.6,207.27 807.4,207.56 808.2,207.73 809.0,207.90 809.8,208.21 810.6,208.82 811.4,208.80 812.2,208.83 813.0,209.51 813.8,209.44 814.6,208.24 815.4,207.84 816.2,207.32 817.0,206.31 817.8,205.66 818.6,205.29 819.4,205.03 820.2,204.46 821.0,203.11 821.8,204.20 822.6,205.90 823.4,206.73 824.2,206.03 825.0,205.53 825.8,205.55 826.6,206.19 827.4,205.33 828.2,205.95 829.0,204.85 829.8,205.37 830.6,205.25 831.4,204.54 832.2,203.96 833.0,203.88 833.8,204.52 834.6,203.78 835.4,203.38 836.2,202.88 837.0,203.50 837.8,203.73 838.6,204.52 839.4,204.68 840.2,205.57 841.0,204.82 841.8,204.78 842.6,203.76 843.4,203.77 844.2,203.33 845.0,202.75 845.8,202.69 846.6,202.04 847.4,203.15 848.2,203.08 849.0,203.25 849.8,203.84 850.6,204.61 851.4,204.60 852.2,203.80 853.0,203.35 853.8,203.54 854.6,202.54 855.4,203.00 856.2,202.63 857.0,202.53 857.8,201.29 858.6,200.85 859.4,200.40 860.2,200.56 861.0,199.60 861.8,198.96 862.6,199.53 863.4,199.62 864.2,200.26 865.0,200.67 865.8,199.96 866.6,200.81 867.4,200.63 868.2,201.25 869.0,200.77 869.8,201.23 870.6,201.63 871.4,201.95 872.2,201.44 873.0,201.72 873.8,201.72 874.6,202.09 875.4,202.40 876.2,202.82 877.0,202.52 877.8,202.62 878.6,202.27 879.4,202.80 880.2,203.20 881.0,202.40 881.8,202.99 882.6,203.22 883.4,202.52 884.2,203.33 885.0,203.46 885.8,203.54 886.6,203.18 887.4,203.29 888.2,202.76 889.0,202.88 889.8,203.40 890.6,203.40 891.4,202.71 892.2,202.68 893.0,202.72 893.8,202.30 894.6,202.58 895.4,202.81 896.2,202.32 897.0,202.54 897.8,202.08 898.6,202.75 899.4,202.58 900.2,202.35 901.0,203.04 901.8,203.12 902.6,203.25 903.4,202.93 904.2,203.00 905.0,202.81 905.8,203.43 906.6,203.88 907.4,203.35 908.2,203.05 909.0,203.74 909.8,204.22 910.6,204.10 911.4,203.23 912.2,202.98 913.0,202.09 913.8,202.27 914.6,202.01 915.4,201.29 916.2,200.94 917.0,200.32 917.8,200.71 918.6,201.24 919.4,201.38 920.2,201.80 921.0,202.43 921.8,203.58 922.6,204.13 923.4,204.20 924.2,204.23 925.0,204.44 925.8,205.23 926.6,204.77 927.4,205.44 928.2,205.16 929.0,205.97 929.8,205.43 930.6,205.46 931.4,206.01 932.2,205.47 933.0,205.10 933.8,205.77 934.6,205.55"/>
<polyline fill="none" stroke="#f00" stroke-width="1" points="88.0,234.42 88.8,234.27 89.6,233.79 90.4,233.66 91.2,233.46 92.0,233.17 92.8,232.89 93.6,232.43 94.4,232.30 95.2,232.35 96.0,232.47 96.8,232.52 97.6,232.66 98.4,232.67 99.2,232.69 100.0,232.60 100.8,232.53 101.6,232.55 102.4,232.79 103.2,232.85 104.0,233.02 104.8,233.10 105.6,232.95 106.4,233.09 107.2,233.05 108.0,233.20 108.8,233.15 109.6,233.36 110.4,233.40 111.2,233.56 112.0,233.63 112.8,233.63 113.6,233.71 114.4,233.75 115.2,233.86 116.0,233.87 116.8,233.89 117.6,233.76 118.4,233.46 119.2,233.40 120.0,233.01 120.8,232.98 121.6,232.74 122.4,232.51 123.2,232.17 124.0,231.82 124.8,231.54 125.6,231.34 126.4,231.51 127.2,231.40 128.0,231.36 128.8,231.49 129.6,231.46 130.4,231.37 131.2,231.21 132.0,231.15 132.8,231.19 133.6,231.33 134.4,231.28 135.2,231.17 136.0,231.17 136.8,231.17 137.6,231.04 138.4,231.21 139.2,231.08 140.0,231.03 140.8,230.97 141.6,230.89 142.4,230.83 143.2,230.88 144.0,230.96 144.8,231.02 145.6,231.00 146.4,230.97 147.2,230.69 148.0,230.85 148.8,230.88 149.6,230.71 150.4,230.60 151.2,230.59 152.0,230.70 152.8,230.72 153.6,230.68 154.4,230.61 155.2,230.59 156.0,230.46 156.8,230.39 157.6,230.29 158.4,230.23 159.2,230.35 160.0,230.37 160.8,230.11 161.6,230.27 162.4,230.25 163.2,230.20 164.0,230.05 164.8,229.95 165.6,230.06 166.4,229.97 167.2,230.04 168.0,230.05 168.8,229.92 169.6,229.99 170.4,230.05 171.2,229.95 172.0,229.93 172.8,230.02 173.6,230.04 174.4,230.00 175.2,230.00 176.0,229.79 176.8,229.91 177.6,229.86 178.4,229.84 179.2,229.78 180.0,229.71 180.8,229.77 181.6,229.69 182.4,229.72 183.2,229.70 184.0,229.63 184.8,229.61 185.6,229.47 186.4,229.55 187.2,229.49 188.0,229.63 188.8,229.51 189.6,229.58 190.4,229.47 191.2,229.35 192.0,229.45 192.8,229.54 193.6,229.56 194.4,229.35 195.2,229.47 196.0,229.51 196.8,229.53 197.6,229.51 198.4,229.26 199.2,229.33 200.0,229.46 200.8,229.49 201.6,229.43 202.4,229.32 203.2,229.44 204.0,229.21 204.8,229.28 205.6,229.18 206.4,229.34 207.2,229.15 208.0,229.32 208.8,229.39 209.6,229.15 210.4,229.24 211.2,229.20 212.0,229.07 212.8,229.22 213.6,229.32 214.4,229.17 215.2,229.12 216.0,229.30 216.8,229.14 217.6,229.11 218.4,229.25 219.2,229.15 220.0,229.15 220.8,229.31 221.6,229.33 222.4,229.18 223.2,229.40 224.0,229.40 224.8,229.31 225.6,229.40 226.4,229.24 227.2,229.42 228.0,229.52 228.8,229.35 229.6,229.32 230.4,229.36 231.2,229.49 232.0,229.50 232.8,229.39 233.6,229.85 234.4,230.05 235.2,230.65 236.0,231.14 236.8,231.59 237.6,231.55 238.4,231.20 239.2,231.12 240.0,231.15 240.8,230.96 241.6,230.90 242.4,230.80 243.2,230.43 244.0,230.44 244.8,230.30 245.6,230.26 246.4,230.16 247.2,229.92 248.0,229.97 248.8,229.99 249.6,230.18 250.4,230.51 251.2,230.48 252.0,230.73 252.8,230.81 253.6,230.93 254.4,230.97 255.2,231.05 256.0,231.18 256.8,231.38 257.6,231.23 258.4,231.23 259.2,231.39 260.0,231.33 260.8,231.30 261.6,231.45 262.4,231.83 263.2,232.16 264.0,232.70 264.8,232.98 265.6,233.61 266.4,233.97 267.2,234.41 268.0,234.86 268.8,235.19 269.6,235.72 270.4,236.05 271.2,236.59 272.0,237.27 272.8,238.02 273.6,238.47 274.4,239.03 275.2,239.17 276.0,239.26 276.8,239.64 277.6,239.73 278.4,239.73 279.2,239.92 280.0,240.22 280.8,240.26 281.6,239.91 282.4,239.59 283.2,239.53 284.0,239.24 284.8,238.98 285.6,238.91 286.4,238.58 287.2,238.36 288.0,238.11 288.8,238.06 289.6,237.94 290.4,237.52 291.2,237.52 292.0,237.39 292.8,237.10 293.6,236.81 294.4,236.67 295.2,236.36 296.0,236.56 296.8,236.40 297.6,236.25 298.4,236.37 299.2,236.47 300.0,236.24 300.8,236.38 301.6,236.20 302.4,236.20 303.2,236.23 304.0,236.25 304.8,236.09 305.6,236.18 306.4,235.95 307.2,236.11 308.0,236.05 308.8,235.94 309.6,235.94 310.4,235.88 311.2,235.72 312.0,235.87 312.8,235.92 313.6,235.79 314.4,235.86 315.2,235.67 316.0,235.57 316.8,235.62 317.6,235.70 318.4,235.88 319.2,235.75 320.0,235.91 320.8,235.96 321.6,236.30 322.4,236.24 323.2,236.27 324.0,236.47 324.8,236.75 325.6,236.69 326.4,236.88 327.2,236.91 328.0,237.17 328.8,237.42 329.6,237.52 330.4,237.50 331.2,237.61 332.0,237.69 332.8,237.76 333.6,237.73 334.4,237.90 335.2,237.91 336.0,237.86 336.8,237.91 337.6,238.23 338.4,238.29 339.2,238.38 340.0,238.50 340.8,238.42 341.6,238.57 342.4,238.62 343.2,238.66 344.0,238.80 344.8,238.85 345.6,238.86 346.4,238.67 347.2,238.52 348.0,238.58 348.8,238.61 349.6,238.43 350.4,238.30 351.2,238.13 352.0,237.92 352.8,237.90 353.6,237.91 354.4,237.67 355.2,237.64 356.0,237.46 356.8,237.50 357.6,237.37 358.4,237.29 359.2,237.42 360.0,237.43 360.8,237.39 361.6,237.55 362.4,237.56 363.2,237.62 364.0,237.54 364.8,237.67 365.6,237.65 366.4,237.65 367.2,237.79 368.0,237.87 368.8,238.04 369.6,238.18 370.4,238.44 371.2,238.67 372.0,238.81 372.8,239.05 373.6,239.27 374.4,239.65 375.2,239.78 376.0,239.97 376.8,240.24 377.6,239.94 378.4,239.78 379.2,239.66 380.0,239.72 380.8,239.50 381.6,239.23 382.4,239.09 383.2,239.19 384.0,239.34 384.8,239.38 385.6,239.49 386.4,239.53 387.2,239.57 388.0,239.76 388.8,239.83 389.6,240.03 390.4,240.09 391.2,240.21 392.0,240.47 392.8,240.62 393.6,240.71 394.4,240.88 395.2,241.17 396.0,241.37 396.8,241.55 397.6,241.67 398.4,242.08 399.2,242.30 400.0,242.33 400.8,242.44 401.6,242.81 402.4,242.89 403.2,242.87 404.0,242.78 404.8,242.84 405.6,242.74 406.4,242.97 407.2,243.08 408.0,243.10 408.8,242.99 409.6,242.97 410.4,243.03 411.2,243.04 412.0,243.18 412.8,243.21 413.6,243.28 414.4,243.26 415.2,243.11 416.0,243.22 416.8,243.11 417.6,243.30 418.4,243.20 419.2,243.41 420.0,243.45 420.8,243.49 421.6,243.49 422.4,243.57 423.2,243.38 424.0,243.54 424.8,243.56 425.6,243.57 426.4,243.45 427.2,243.43 428.0,243.41 428.8,243.60 429.6,243.42 430.4,243.38 431.2,243.44 432.0,243.59 432.8,243.68 433.6,243.46 434.4,243.34 435.2,243.54 436.0,243.61 436.8,243.53 437.6,243.55 438.4,243.57 439.2,243.58 440.0,243.63 440.8,243.53 441.6,243.64 442.4,243.62 443.2,243.55 444.0,243.47 444.8,243.37 445.6,243.38 446.4,243.47 447.2,243.56 448.0,243.73 448.8,243.56 449.6,243.67 450.4,243.62 451.2,243.67 452.0,243.75 452.8,243.76 453.6,243.90 454.4,244.03 455.2,243.96 456.0,243.89 456.8,243.87 457.6,243.99 458.4,243.91 459.2,243.87 460.0,244.08 460.8,244.15 461.6,244.29 462.4,244.20 463.2,244.10 464.0,244.30 464.8,244.31 465.6,244.45 466.4,244.36 467.2,244.37 468.0,244.37 468.8,244.39 469.6,244.45 470.4,244.74 471.2,244.69 472.0,244.72 472.8,245.00 473.6,244.89 474.4,245.02 475.2,245.00 476.0,245.25 476.8,245.33 477.6,245.31 478.4,245.26 479.2,245.42 480.0,245.39 480.8,245.56 481.6,245.60 482.4,245.74 483.2,245.84 484.0,245.77 484.8,245.93 485.6,245.86 486.4,245.88 487.2,246.10 488.0,245.92 488.8,246.11 489.6,246.06 490.4,245.93 491.2,245.92 492.0,246.10 492.8,246.00 493.6,246.01 494.4,246.02 495.2,246.20 496.0,246.31 496.8,246.12 497.6,246.26 498.4,246.12 499.2,246.25 500.0,246.32 500.8,246.20 501.6,246.10 502.4,246.36 503.2,246.34 504.0,246.25 504.8,246.27 505.6,246.31 506.4,246.39 507.2,246.27 508.0,246.26 508.8,246.30 509.6,246.40 510.4,246.45 511.2,246.46 512.0,246.42 512.8,246.41 513.6,246.53 514.4,246.55 515.2,246.48 516.0,246.36 516.8,246.45 517.6,246.47 518.4,246.52 519.2,246.51 520.0,246.54 520.8,246.54 521.6,246.63 522.4,246.57 523.2,246.51 524.0,246.65 524.8,246.63 525.6,246.64 526.4,246.78 527.2,246.86 528.0,246.62 528.8,246.67 529.6,246.67 530.4,246.88 531.2,246.92 532.0,246.83 532.8,246.84 533.6,246.79 534.4,246.88 535.2,246.89 536.0,246.79 536.8,246.82 537.6,246.84 538.4,247.10 539.2,247.09 540.0,247.18 540.8,247.26 541.6,247.19 542.4,247.19 543.2,247.33 544.0,247.37 544.8,247.19 545.6,247.28 546.4,247.48 547.2,247.29 548.0,247.25 548.8,247.48 549.6,247.62 550.4,247.52 551.2,247.44 552.0,247.44 552.8,247.68 553.6,247.69 554.4,247.58 555.2,247.66 556.0,247.81 556.8,247.69 557.6,247.73 558.4,247.75 559.2,247.78 560.0,247.83 560.8,248.01 561.6,248.08 562.4,247.90 563.2,248.05 564.0,247.88 564.8,248.00 565.6,247.88 566.4,247.97 567.2,247.89 568.0,247.77 568.8,247.82 569.6,247.93 570.4,247.88 571.2,247.84 572.0,247.78 572.8,247.87 573.6,247.97 574.4,247.86 575.2,247.74 576.0,247.80 576.8,247.82 577.6,247.88 578.4,247.87 579.2,247.86 580.0,247.78 580.8,247.75 581.6,247.90 582.4,247.87 583.2,247.78 584.0,247.64 584.8,247.66 585.6,247.60 586.4,247.55 587.2,247.74 588.0,247.61 588.8,247.57 589.6,247.60 590.4,247.52 591.2,247.48 592.0,247.63 592.8,247.67 593.6,247.49 594.4,247.55 595.2,247.52 596.0,247.67 596.8,247.64 597.6,247.68 598.4,247.84 599.2,247.66 600.0,247.83 600.8,247.68 601.6,247.73 602.4,247.67 603.2,247.79 604.0,247.93 604.8,247.96 605.6,247.90 606.4,247.92 607.2,247.90 608.0,247.91 608.8,247.98 609.6,247.93 610.4,247.82 611.2,247.87 612.0,248.03 612.8,247.90 613.6,247.91 614.4,247.80 615.2,247.87 616.0,247.80 616.8,247.65 617.6,247.63 618.4,247.70 619.2,247.73 620.0,247.77 620.8,247.67 621.6,247.81 622.4,247.78 623.2,247.69 624.0,247.74 624.8,247.66 625.6,247.69 626.4,247.49 627.2,247.56 628.0,247.63 628.8,247.51 629.6,247.45 630.4,247.47 631.2,247.64 632.0,247.60 632.8,247.49 633.6,247.38 634.4,247.51 635.2,247.50 636.0,247.36 636.8,247.51 637.6,247.36 638.4,247.20 639.2,247.30 640.0,247.28 640.8,247.06 641.6,247.09 642.4,247.22 643.2,247.10 644.0,246.92 644.8,246.83 645.6,246.77 646.4,246.80 647.2,246.92 648.0,246.87 648.8,246.93 649.6,246.67 650.4,246.68 651.2,246.52 652.0,246.49 652.8,246.53 653.6,246.53 654.4,246.61 655.2,246.50 656.0,246.54 656.8,246.41 657.6,246.26 658.4,246.40 659.2,246.22 660.0,246.34 660.8,246.10 661.6,246.08 662.4,246.15 663.2,246.10 664.0,245.92 664.8,245.93 665.6,246.10 666.4,246.08 667.2,245.96 668.0,245.78 668.8,245.68 669.6,245.66 670.4,245.81 671.2,245.82 672.0,245.59 672.8,245.49 673.6,245.65 674.4,245.64 675.2,245.50 676.0,245.54 676.8,245.38 677.6,245.31 678.4,245.42 679.2,245.32 680.0,245.19 680.8,245.10 681.6,245.23 682.4,245.30 683.2,245.39 684.0,245.24 684.8,245.28 685.6,245.30 686.4,245.49 687.2,245.44 688.0,245.50 688.8,245.60 689.6,245.56 690.4,245.68 691.2,245.91 692.0,246.02 692.8,245.88 693.6,245.97 694.4,246.02 695.2,246.24 696.0,246.39 696.8,246.50 697.6,246.46 698.4,246.60 699.2,246.92 700.0,246.83 700.8,247.43 701.6,247.97 702.4,247.86 703.2,247.34 704.0,247.61 704.8,247.74 705.6,248.05 706.4,247.58 707.2,248.42 708.0,248.99 708.8,248.36 709.6,248.49 710.4,249.29 711.2,248.67 712.0,248.90 712.8,249.37 713.6,249.18 714.4,250.10 715.2,249.90 716.0,249.75 716.8,250.67 717.6,250.15 718.4,250.62 719.2,250.43 720.0,250.34 720.8,250.61 721.6,251.10 722.4,251.13 723.2,251.82 724.0,251.93 724.8,251.65 725.6,251.26 726.4,252.15 727.2,252.00 728.0,251.62 728.8,252.56 729.6,252.21 730.4,252.10 731.2,252.96 732.0,253.40 732.8,252.77 733.6,253.20 734.4,253.32 735.2,252.78 736.0,252.10 736.8,251.69 737.6,252.02 738.4,252.09 739.2,252.40 740.0,251.57 740.8,252.44 741.6,252.68 742.4,251.48 743.2,251.66 744.0,250.99 744.8,251.73 745.6,251.00 746.4,251.01 747.2,250.90 748.0,251.33 748.8,250.90 749.6,251.19 750.4,250.97 751.2,251.23 752.0,250.28 752.8,250.09 753.6,250.14 754.4,250.43 755.2,250.09 756.0,249.92 756.8,250.48 757.6,249.50 758.4,248.87 759.2,249.35 760.0,249.47 760.8,249.41 761.6,249.61 762.4,249.22 763.2,249.02 764.0,248.75 764.8,248.44 765.6,248.69 766.4,249.14 767.2,249.21 768.0,249.18 768.8,249.90 769.6,250.12 770.4,249.66 771.2,250.15 772.0,250.45 772.8,250.95 773.6,251.83 774.4,251.25 775.2,251.55 776.0,252.49 776.8,252.76 777.6,252.76 778.4,252.73 779.2,253.16 780.0,253.36 780.8,253.64 781.6,253.56 782.4,252.80 783.2,253.16 784.0,253.57 784.8,252.86 785.6,253.00 786.4,253.36 787.2,252.44 788.0,252.47 788.8,252.98 789.6,252.73 790.4,253.37 791.2,252.67 792.0,252.91 792.8,252.73 793.6,252.19 794.4,252.82 795.2,252.19 796.0,251.50 796.8,251.44 797.6,251.93 798.4,251.86 799.2,250.99 800.0,250.94 800.8,250.51 801.6,250.34 802.4,250.82 803.2,250.08 804.0,249.41 804.8,249.83 805.6,249.27 806.4,249.44 807.2,249.39 808.0,248.98 808.8,248.77 809.6,249.56 810.4,248.68 811.2,249.43 812.0,249.15 812.8,249.16 813.6,249.18 814.4,249.23 815.2,248.54 816.0,247.97 816.8,247.91 817.6,248.25 818.4,248.25 819.2,248.25 820.0,247.70 820.8,247.84 821.6,247.65 822.4,247.27 823.2,248.11 824.0,248.01 824.8,247.69 825.6,248.70 826.4,248.21 827.2,248.07 828.0,248.17 828.8,247.74 829.6,247.57 830.4,247.85 831.2,248.57 832.0,249.09 832.8,248.51 833.6,248.32 834.4,248.03 835.2,247.75 836.0,248.84 836.8,249.49 837.6,249.47 838.4,250.04 839.2,251.30 840.0,251.01 840.8,251.34 841.6,252.06 842.4,252.92 843.2,252.92 844.0,252.58 844.8,252.29 845.6,253.01 846.4,253.20 847.2,252.79 848.0,253.58 848.8,253.25 849.6,253.92 850.4,253.54 851.2,254.04 852.0,254.80 852.8,253.87 853.6,254.35 854.4,254.13 855.2,254.27 856.0,253.74 856.8,253.62 857.6,254.74 858.4,254.48 859.2,254.02 860.0,254.32 860.8,254.75 861.6,254.04 862.4,254.97 863.2,254.51 864.0,254.15 864.8,254.82 865.6,254.42 866.4,253.76 867.2,253.58 868.0,254.20 868.8,254.09 869.6,253.83 870.4,254.12 871.2,253.57 872.0,253.11 872.8,253.56 873.6,253.04 874.4,252.90 875.2,252.49 876.0,253.11 876.8,253.29 877.6,253.51 878.4,252.52 879.2,252.94 880.0,252.28 880.8,252.32 881.6,252.25 882.4,252.44 883.2,251.53 884.0,251.59 884.8,252.06 885.6,251.33 886.4,250.75 887.2,251.06 888.0,250.86 888.8,251.35 889.6,250.98 890.4,251.14 891.2,251.13 892.0,250.22 892.8,250.72 893.6,250.44 894.4,250.41 895.2,250.61 896.0,250.30 896.8,249.68 897.6,250.20 898.4,250.37 899.2,250.79 900.0,250.87 900.8,249.57 901.6,250.02 902.4,249.29 903.2,249.90 904.0,250.41 904.8,249.67 905.6,250.05 906.4,249.93 907.2,249.51 908.0,249.89 908.8,249.08 909.6,248.81 910.4,249.32 911.2,248.87 912.0,248.25 912.8,248.65 913.6,248.73 914.4,248.40 915.2,248.05 916.0,247.93 916.8,248.50 917.6,248.35 918.4,247.55 919.2,248.40 920.0,247.89 920.8,247.91 921.6,248.41 922.4,247.63 923.2,247.82 924.0,247.65 924.8,247.62 925.6,247.27 926.4,247.66 927.2,247.30 928.0,247.04 928.8,247.16 929.6,247.24 930.4,246.51 931.2,246.44 932.0,246.35 932.8,246.58 933.6,247.23 934.4,247.22 935.2,246.50"/>
<polyline fill="none" stroke="#222" stroke-width="1" points="88.0,328.37 88.8,329.13 89.6,330.15 90.4,330.10 91.2,329.26 92.0,328.73 92.8,328.03 93.6,327.16 94.4,326.56 95.2,325.80 96.0,325.04 96.8,324.82 97.6,324.51 98.4,324.43 99.2,324.32 100.0,324.12 100.8,324.20 101.6,323.97 102.4,323.82 103.2,323.00 104.0,322.41 104.8,321.94 105.6,320.95 106.4,321.91 107.2,322.54 108.0,322.82 108.8,322.04 109.6,320.90 110.4,320.20 111.2,319.39 112.0,319.07 112.8,318.71 113.6,318.45 114.4,318.21 115.2,317.86 116.0,317.45 116.8,316.92 117.6,316.58 118.4,315.82 119.2,315.29 120.0,314.29 120.8,313.88 121.6,312.62 122.4,310.94 123.2,309.36 124.0,307.72 124.8,306.07 125.6,304.97 126.4,304.20 127.2,303.54 128.0,303.10 128.8,302.67 129.6,302.12 130.4,301.31 131.2,300.77 132.0,300.18 132.8,300.07 133.6,299.56 134.4,299.15 135.2,298.85 136.0,298.62 136.8,298.21 137.6,297.82 138.4,297.74 139.2,297.19 140.0,296.95 140.8,296.61 141.6,296.37 142.4,296.23 143.2,296.05 144.0,295.84 144.8,295.58 145.6,295.63 146.4,295.67 147.2,295.44 148.0,295.34 148.8,295.06 149.6,295.07 150.4,294.74 151.2,294.59 152.0,294.21 152.8,293.81 153.6,293.74 154.4,293.63 155.2,293.19 156.0,293.08 156.8,293.02 157.6,293.01 158.4,292.88 159.2,292.95 160.0,292.89 160.8,292.98 161.6,292.73 162.4,292.75 163.2,292.21 164.0,291.72 164.8,291.09 165.6,290.73 166.4,290.27 167.2,289.94 168.0,289.62 168.8,289.32 169.6,289.47 170.4,289.16 171.2,288.76 172.0,288.55 172.8,288.56 173.6,288.14 174.4,288.11 175.2,287.81 176.0,287.81 176.8,287.37 177.6,287.52 178.4,287.37 179.2,287.58 180.0,287.57 180.8,287.53 181.6,287.55 182.4,287.33 183.2,287.55 184.0,287.07 184.8,286.84 185.6,286.51 186.4,286.13 187.2,286.13 188.0,285.73 188.8,285.57 189.6,285.13 190.4,284.82 191.2,284.56 192.0,284.29 192.8,284.11 193.6,284.12 194.4,284.02 195.2,283.98 196.0,283.71 196.8,283.54 197.6,283.52 198.4,283.42 199.2,283.23 200.0,283.28 200.8,283.32 201.6,283.14 202.4,283.21 203.2,282.98 204.0,282.61 204.8,282.60 205.6,282.59 206.4,282.49 207.2,282.36 208.0,282.03 208.8,282.08 209.6,281.79 210.4,281.59 211.2,281.43 212.0,281.50 212.8,281.25 213.6,281.42 214.4,281.14 215.2,281.29 216.0,281.31 216.8,281.27 217.6,281.70 218.4,281.63 219.2,281.81 220.0,282.03 220.8,282.12 221.6,281.95 222.4,282.07 223.2,282.38 224.0,282.32 224.8,282.48 225.6,282.48 226.4,282.66 227.2,282.72 228.0,282.68 228.8,282.90 229.6,282.80 230.4,282.82 231.2,283.02 232.0,282.96 232.8,283.08 233.6,283.27 234.4,283.17 235.2,283.12 236.0,282.85 236.8,282.57 237.6,281.69 238.4,280.71 239.2,279.80 240.0,278.91 240.8,278.18 241.6,277.15 242.4,276.25 243.2,275.17 244.0,274.41 244.8,273.57 245.6,272.57 246.4,271.71 247.2,270.71 248.0,270.71 248.8,270.90 249.6,271.08 250.4,271.58 251.2,271.86 252.0,272.34 252.8,272.60 253.6,272.79 254.4,272.63 255.2,272.59 256.0,272.68 256.8,272.61 257.6,272.35 258.4,272.38 259.2,272.29 260.0,272.46 260.8,272.40 261.6,272.31 262.4,272.34 263.2,273.00 264.0,273.32 264.8,273.87 265.6,274.43 266.4,274.69 267.2,275.39 268.0,275.67 268.8,276.22 269.6,276.83 270.4,277.43 271.2,279.38 272.0,281.65 272.8,283.67 273.6,284.45 274.4,283.95 275.2,283.16 276.0,283.58 276.8,284.42 277.6,284.69 278.4,284.32 279.2,283.94 280.0,283.78 280.8,283.31 281.6,282.97 282.4,282.99 283.2,282.06 284.0,281.42 284.8,280.55 285.6,279.61 286.4,278.83 287.2,278.06 288.0,277.10 288.8,276.30 289.6,275.54 290.4,274.69 291.2,273.93 292.0,273.57 292.8,273.19 293.6,272.93 294.4,272.46 295.2,272.18 296.0,271.88 296.8,271.52 297.6,271.15 298.4,270.94 299.2,270.70 300.0,270.29 300.8,269.97 301.6,269.79 302.4,269.52 303.2,268.97 304.0,268.43 304.8,268.07 305.6,267.80 306.4,267.39 307.2,267.03 308.0,266.85 308.8,266.88 309.6,266.94 310.4,266.91 311.2,266.93 312.0,267.04 312.8,266.92 313.6,266.94 314.4,267.18 315.2,267.26 316.0,267.22 316.8,266.90 317.6,265.94 318.4,265.08 319.2,264.82 320.0,265.11 320.8,265.40 321.6,265.21 322.4,265.30 323.2,265.67 324.0,265.90 324.8,265.81 325.6,265.97 326.4,266.33 327.2,266.28 328.0,266.45 328.8,266.82 329.6,266.94 330.4,267.37 331.2,267.54 332.0,267.82 332.8,268.08 333.6,268.36 334.4,268.76 335.2,268.81 336.0,269.09 336.8,269.60 337.6,269.82 338.4,270.26 339.2,270.62 340.0,270.49 340.8,270.77 341.6,270.67 342.4,270.97 343.2,271.01 344.0,271.22 344.8,271.30 345.6,271.32 346.4,271.28 347.2,271.21 348.0,270.91 348.8,270.68 349.6,270.41 350.4,270.43 351.2,269.96 352.0,269.98 352.8,269.61 353.6,269.30 354.4,268.92 355.2,268.46 356.0,267.74 356.8,267.19 357.6,266.78 358.4,266.16 359.2,265.85 360.0,265.08 360.8,264.91 361.6,265.17 362.4,265.10 363.2,265.09 364.0,264.88 364.8,264.72 365.6,264.71 366.4,264.69 367.2,265.03 368.0,265.41 368.8,266.13 369.6,266.38 370.4,266.70 371.2,267.26 372.0,267.70 372.8,268.23 373.6,268.55 374.4,269.10 375.2,269.52 376.0,269.93 376.8,270.41 377.6,269.81 378.4,269.60 379.2,269.30 380.0,268.79 380.8,268.41 381.6,268.08 382.4,267.72 383.2,267.43 384.0,267.17 384.8,267.00 385.6,266.97 386.4,267.03 387.2,266.97 388.0,266.77 388.8,266.68 389.6,267.05 390.4,267.41 391.2,267.63 392.0,267.76 392.8,268.09 393.6,268.41 394.4,268.79 395.2,269.16 396.0,269.46 396.8,269.99 397.6,270.21 398.4,269.96 399.2,270.15 400.0,270.13 400.8,269.98 401.6,270.03 402.4,270.17 403.2,270.18 404.0,270.36 404.8,270.43 405.6,270.25 406.4,270.13 407.2,270.23 408.0,270.49 408.8,270.86 409.6,271.12 410.4,271.12 411.2,271.15 412.0,271.20 412.8,270.95 413.6,270.76 414.4,270.06 415.2,269.59 416.0,269.26 416.8,269.51 417.6,269.38 418.4,269.26 419.2,269.21 420.0,269.49 420.8,269.45 421.6,269.53 422.4,269.42 423.2,269.29 424.0,269.21 424.8,269.18 425.6,269.18 426.4,269.30 427.2,269.21 428.0,269.48 428.8,269.69 429.6,269.82 430.4,270.13 431.2,270.22 432.0,270.49 432.8,270.66 433.6,270.72 434.4,271.05 435.2,271.21 436.0,271.37 436.8,271.51 437.6,271.62 438.4,271.75 439.2,271.95 440.0,272.30 440.8,272.57 441.6,272.09 442.4,271.77 443.2,271.53 444.0,271.24 444.8,270.84 445.6,270.71 446.4,270.88 447.2,270.65 448.0,270.75 448.8,270.67 449.6,270.54 450.4,270.59 451.2,270.78 452.0,270.47 452.8,270.54 453.6,270.52 454.4,270.40 455.2,270.27 456.0,270.43 456.8,270.34 457.6,270.46 458.4,270.53 459.2,270.82 460.0,270.74 460.8,270.91 461.6,271.02 462.4,271.05 463.2,271.15 464.0,271.25 464.8,271.45 465.6,271.53 466.4,271.73 467.2,272.01 468.0,272.01 468.8,272.17 469.6,272.25 470.4,272.40 471.2,272.37 472.0,272.63 472.8,272.88 473.6,272.87 474.4,273.21 475.2,273.36 476.0,273.70 476.8,273.37 477.6,273.20 478.4,273.09 479.2,273.00 480.0,272.56 480.8,272.49 481.6,272.44 482.4,272.24 483.2,272.39 484.0,272.66 484.8,272.83 485.6,272.99 486.4,273.33 487.2,273.49 488.0,273.86 488.8,274.04 489.6,273.89 490.4,274.05 491.2,274.14 492.0,274.02 492.8,274.01 493.6,274.02 494.4,274.25 495.2,274.08 496.0,274.02 496.8,273.91 497.6,274.17 498.4,274.14 499.2,273.99 500.0,273.78 500.8,273.69 501.6,273.39 502.4,273.27 503.2,273.09 504.0,273.14 504.8,273.06 505.6,272.85 506.4,272.50 507.2,272.31 508.0,272.28 508.8,272.44 509.6,272.59 510.4,272.47 511.2,272.43 512.0,272.65 512.8,272.35 513.6,272.18 514.4,272.18 515.2,271.86 516.0,272.04 516.8,271.89 517.6,271.90 518.4,271.65 519.2,271.53 520.0,271.34 520.8,271.32 521.6,271.11 522.4,271.25 523.2,270.98 524.0,271.12 524.8,270.94 525.6,271.07 526.4,271.14 527.2,270.83 528.0,270.71 528.8,270.76 529.6,270.75 530.4,270.82 531.2,270.92 532.0,270.64 532.8,270.52 533.6,270.80 534.4,270.73 535.2,270.81 536.0,270.58 536.8,270.49 537.6,270.28 538.4,270.40 539.2,270.63 540.0,270.61 540.8,270.83 541.6,270.80 542.4,271.18 543.2,271.07 544.0,271.19 544.8,271.46 545.6,271.55 546.4,271.45 547.2,271.34 548.0,271.38 548.8,271.42 549.6,271.49 550.4,271.44 551.2,271.28 552.0,271.44 552.8,271.27 553.6,271.26 554.4,271.09 555.2,270.97 556.0,270.94 556.8,271.16 557.6,271.09 558.4,270.93 559.2,270.87 560.0,271.04 560.8,270.87 561.6,270.75 562.4,270.78 563.2,270.96 564.0,270.99 564.8,270.85 565.6,270.76 566.4,270.46 567.2,270.25 568.0,270.21 568.8,269.92 569.6,270.12 570.4,269.83 571.2,269.62 572.0,269.66 572.8,269.42 573.6,269.55 574.4,269.38 575.2,269.35 576.0,269.46 576.8,269.28 577.6,269.41 578.4,269.25 579.2,269.13 580.0,268.96 580.8,269.01 581.6,269.10 582.4,268.85 583.2,269.11 584.0,268.86 584.8,268.93 585.6,269.00 586.4,268.69 587.2,268.63 588.0,268.84 588.8,268.89 589.6,268.53 590.4,268.62 591.2,268.66 592.0,268.50 592.8,268.61 593.6,268.53 594.4,268.41 595.2,268.31 596.0,268.64 596.8,268.82 597.6,268.67 598.4,268.83 599.2,268.88 600.0,269.00 600.8,268.88 601.6,268.92 602.4,269.20 603.2,269.05 604.0,269.07 604.8,269.47 605.6,269.31 606.4,269.42 607.2,269.63 608.0,269.53 608.8,269.87 609.6,269.94 610.4,270.02 611.2,269.93 612.0,270.12 612.8,270.52 613.6,270.45 614.4,270.69 615.2,270.96 616.0,271.24 616.8,271.44 617.6,271.66 618.4,271.66 619.2,271.97 620.0,272.25 620.8,272.34 621.6,272.15 622.4,272.41 623.2,272.44 624.0,272.41 624.8,272.46 625.6,272.57 626.4,272.55 627.2,272.62 628.0,272.78 628.8,272.75 629.6,272.84 630.4,273.01 631.2,272.95 632.0,272.88 632.8,273.00 633.6,272.98 634.4,272.99 635.2,273.29 636.0,273.12 636.8,273.17 637.6,273.28 638.4,273.34 639.2,273.21 640.0,273.18 640.8,273.27 641.6,273.25 642.4,273.39 643.2,273.54 644.0,273.40 644.8,273.59 645.6,273.69 646.4,273.81 647.2,274.20 648.0,274.47 648.8,274.42 649.6,274.52 650.4,275.52 651.2,275.63 652.0,276.01 652.8,276.46 653.6,276.22 654.4,276.18 655.2,277.14 656.0,278.68 656.8,279.05 657.6,279.73 658.4,278.41 659.2,279.35 660.0,279.88 660.8,280.28 661.6,280.33 662.4,280.02 663.2,280.49 664.0,279.49 664.8,279.70 665.6,280.76 666.4,281.28 667.2,280.97 668.0,280.83 668.8,281.37 669.6,281.32 670.4,282.06 671.2,283.25 672.0,282.49 672.8,283.56 673.6,283.56 674.4,284.05 675.2,284.75 676.0,284.63 676.8,285.26 677.6,284.61 678.4,285.48 679.2,284.97 680.0,286.41 680.8,286.59 681.6,286.76 682.4,286.77 683.2,286.70 684.0,287.37 684.8,288.20 685.6,289.71 686.4,290.14 687.2,290.05 688.0,289.35 688.8,290.18 689.6,291.00 690.4,290.70 691.2,290.29 692.0,290.43 692.8,291.07 693.6,291.01 694.4,290.89 695.2,290.88 696.0,291.52 696.8,292.00 697.6,292.59 698.4,292.14 699.2,292.75 700.0,292.85 700.8,293.15 701.6,293.88 702.4,293.66 703.2,293.87 704.0,295.20 704.8,296.18 705.6,297.60 706.4,298.45 707.2,298.69 708.0,298.19 708.8,299.76 709.6,299.34 710.4,299.60 711.2,299.79 712.0,300.56 712.8,301.57 713.6,300.72 714.4,300.72 715.2,300.84 716.0,302.45 716.8,301.97 717.6,301.72 718.4,301.95 719.2,302.68 720.0,303.85 720.8,303.24 721.6,304.32 722.4,305.28 723.2,304.77 724.0,305.62 724.8,305.85 725.6,306.49 726.4,307.32 727.2,306.61 728.0,306.68 728.8,308.40 729.6,307.84 730.4,309.02 731.2,308.51 732.0,308.07 732.8,309.30 733.6,308.66 734.4,308.47 735.2,310.48 736.0,312.52 736.8,312.37 737.6,312.82 738.4,313.35 739.2,312.58 740.0,313.08 740.8,312.61 741.6,312.76 742.4,311.01 743.2,311.32 744.0,311.31 744.8,311.13 745.6,311.41 746.4,311.39 747.2,311.64 748.0,310.06 748.8,309.54 749.6,310.08 750.4,309.06 751.2,308.70 752.0,309.20 752.8,310.52 753.6,310.96 754.4,309.48 755.2,310.45 756.0,309.54 756.8,310.74 757.6,310.19 758.4,311.58 759.2,313.31 760.0,312.85 760.8,314.99 761.6,314.42 762.4,313.86 763.2,313.13 764.0,312.22 764.8,312.58 765.6,312.18 766.4,312.51 767.2,313.59 768.0,312.83 768.8,313.27 769.6,314.06 770.4,314.26 771.2,314.54 772.0,315.18 772.8,315.56 773.6,315.12 774.4,315.83 775.2,317.09 776.0,317.14 776.8,317.68 777.6,317.26 778.4,316.38 779.2,317.23 780.0,316.18 780.8,316.15 781.6,315.23 782.4,315.77 783.2,315.86 784.0,314.13 784.8,314.92 785.6,315.09 786.4,316.00 787.2,315.86 788.0,317.51 788.8,317.32 789.6,318.81 790.4,319.18 791.2,319.19 792.0,318.95 792.8,319.97 793.6,318.94 794.4,319.07 795.2,319.44 796.0,318.87 796.8,318.81 797.6,319.65 798.4,319.39 799.2,318.58 800.0,318.00 800.8,319.12 801.6,319.07 802.4,318.71 803.2,318.30 804.0,317.15 804.8,316.43 805.6,316.13 806.4,315.82 807.2,315.05 808.0,315.95 808.8,316.48 809.6,315.81 810.4,315.40 811.2,315.74 812.0,315.88 812.8,315.08 813.6,315.51 814.4,315.81 815.2,314.74 816.0,315.40 816.8,315.67 817.6,317.41 818.4,318.41 819.2,319.13 820.0,319.10 820.8,319.93 821.6,320.64 822.4,323.74 823.2,322.60 824.0,322.81 824.8,321.99 825.6,320.98 826.4,320.04 827.2,319.71 828.0,318.40 828.8,319.75 829.6,318.57 830.4,318.59 831.2,319.93 832.0,319.53 832.8,320.26 833.6,319.50 834.4,321.22 835.2,320.87 836.0,322.13 836.8,322.39 837.6,323.22 838.4,324.25 839.2,325.71 840.0,325.78 840.8,326.52 841.6,326.76 842.4,327.97 843.2,328.00 844.0,328.32 844.8,328.72 845.6,328.47 846.4,328.60 847.2,329.81 848.0,329.16 848.8,330.06 849.6,331.13 850.4,331.75 851.2,331.63 852.0,331.76 852.8,331.28 853.6,331.53 854.4,331.68 855.2,331.86 856.0,332.62 856.8,332.70 857.6,333.36 858.4,333.31 859.2,335.15 860.0,334.66 860.8,336.58 861.6,336.89 862.4,336.18 863.2,336.86 864.0,336.69 864.8,334.83 865.6,335.25 866.4,334.58 867.2,334.29 868.0,334.74 868.8,334.15 869.6,332.81 870.4,333.50 871.2,332.93 872.0,332.99 872.8,331.47 873.6,332.48 874.4,331.78 875.2,330.64 876.0,331.57 876.8,330.72 877.6,329.66 878.4,330.45 879.2,329.00 880.0,329.57 880.8,328.49 881.6,327.70 882.4,327.53 883.2,328.49 884.0,328.30 884.8,327.19 885.6,328.06 886.4,327.88 887.2,328.04 888.0,327.33 888.8,326.99 889.6,326.71 890.4,326.97 891.2,325.51 892.0,326.38 892.8,326.19 893.6,325.95 894.4,325.52 895.2,325.96 896.0,325.60 896.8,324.81 897.6,324.69 898.4,324.34 899.2,323.63 900.0,324.45 900.8,324.57 901.6,324.94 902.4,324.94 903.2,323.72 904.0,323.25 904.8,323.04 905.6,324.06 906.4,323.11 907.2,324.61 908.0,323.87 908.8,324.29 909.6,324.96 910.4,325.41 911.2,324.51 912.0,324.83 912.8,324.92 913.6,325.04 914.4,325.16 915.2,326.04 916.0,325.38 916.8,324.74 917.6,324.81 918.4,324.01 919.2,322.64 920.0,322.85 920.8,320.83 921.6,320.55 922.4,319.63 923.2,319.83 924.0,319.10 924.8,318.11 925.6,317.94 926.4,317.32 927.2,317.68 928.0,317.40 928.8,316.12 929.6,315.53 930.4,315.49 931.2,316.31 932.0,315.16 932.8,314.89 933.6,314.42 934.4,314.02 935.2,314.22"/>
<polyline fill="none" stroke="#333" stroke-width="1" points="88.0,418.85 88.8,418.75 89.6,419.00 90.4,418.90 91.2,419.06 92.0,419.09 92.8,419.07 93.6,419.21 94.4,419.35 95.2,419.51 96.0,419.64 96.8,419.58 97.6,419.86 98.4,419.88 99.2,419.94 100.0,420.13 100.8,420.20 101.6,420.07 102.4,420.17 103.2,420.32 104.0,420.35 104.8,420.57 105.6,420.39 106.4,420.26 107.2,420.07 108.0,420.02 108.8,420.00 109.6,419.72 110.4,419.64 111.2,419.52 112.0,419.40 112.8,419.43 113.6,419.30 114.4,419.17 115.2,418.96 116.0,418.78 116.8,418.68 117.6,418.68 118.4,418.32 119.2,418.23 120.0,417.91 120.8,417.81 121.6,417.53 122.4,417.57 123.2,417.40 124.0,416.99 124.8,416.98 125.6,416.84 126.4,416.83 127.2,416.92 128.0,416.79 128.8,416.69 129.6,416.92 130.4,416.78 131.2,416.86 132.0,416.77 132.8,416.91 133.6,416.77 134.4,416.98 135.2,416.81 136.0,416.74 136.8,416.70 137.6,416.94 138.4,416.84 139.2,416.75 140.0,416.82 140.8,417.01 141.6,417.02 142.4,417.11 143.2,416.98 144.0,416.86 144.8,417.04 145.6,416.92 146.4,416.86 147.2,417.05 148.0,417.07 148.8,416.94 149.6,416.91 150.4,416.83 151.2,416.90 152.0,417.00 152.8,416.97 153.6,416.87 154.4,416.82 155.2,417.05 156.0,416.90 156.8,416.88 157.6,416.92 158.4,416.91 159.2,416.89 160.0,417.10 160.8,417.09 161.6,416.96 162.4,416.94 163.2,416.91 164.0,417.00 164.8,416.93 165.6,417.09 166.4,417.02 167.2,416.91 168.0,417.10 168.8,417.16 169.6,417.17 170.4,417.17 171.2,417.06 172.0,417.15 172.8,416.90 173.6,417.07 174.4,417.07 175.2,417.04 176.0,416.89 176.8,416.86 177.6,417.11 178.4,417.16 179.2,417.03 180.0,416.91 180.8,417.09 181.6,417.04 182.4,417.00 183.2,416.85 184.0,417.02 184.8,416.86 185.6,416.81 186.4,416.93 187.2,416.84 188.0,417.03 188.8,416.98 189.6,416.87 190.4,417.08 191.2,416.87 192.0,416.98 192.8,417.08 193.6,416.97 194.4,416.98 195.2,416.79 196.0,416.89 196.8,416.86 197.6,416.94 198.4,416.69 199.2,416.68 200.0,416.62 200.8,416.71 201.6,416.53 202.4,416.70 203.2,416.62 204.0,416.53 204.8,416.68 205.6,416.44 206.4,416.39 207.2,416.52 208.0,416.56 208.8,416.34 209.6,416.29 210.4,416.26 211.2,416.28 212.0,416.31 212.8,416.37 213.6,416.41 214.4,416.37 215.2,416.19 216.0,416.05 216.8,416.09 217.6,416.16 218.4,416.08 219.2,416.19 220.0,416.20 220.8,416.05 221.6,416.02 222.4,416.12 223.2,416.03 224.0,415.89 224.8,415.96 225.6,415.81 226.4,415.79 227.2,415.84 228.0,415.71 228.8,415.81 229.6,415.76 230.4,415.60 231.2,415.68 232.0,415.50 232.8,415.57 233.6,415.46 234.4,415.40 235.2,415.30 236.0,415.15 236.8,415.03 237.6,414.71 238.4,414.56 239.2,414.51 240.0,414.18 240.8,414.00 241.6,413.95 242.4,413.85 243.2,413.57 244.0,413.62 244.8,413.51 245.6,413.45 246.4,413.44 247.2,413.21 248.0,413.22 248.8,413.00 249.6,413.01 250.4,413.08 251.2,413.11 252.0,412.89 252.8,413.03 253.6,412.94 254.4,412.96 255.2,412.76 256.0,412.74 256.8,412.69 257.6,412.77 258.4,412.61 259.2,412.73 260.0,412.54 260.8,412.68 261.6,412.61 262.4,412.47 263.2,412.50 264.0,412.42 264.8,412.20 265.6,412.09 266.4,411.87 267.2,411.93 268.0,411.62 268.8,411.58 269.6,411.41 270.4,411.38 271.2,411.29 272.0,411.13 272.8,411.05 273.6,410.94 274.4,410.89 275.2,410.72 276.0,410.61 276.8,410.53 277.6,410.40 278.4,410.46 279.2,410.35 280.0,410.21 280.8,409.99 281.6,409.82 282.4,409.64 283.2,409.42 284.0,409.19 284.8,409.11 285.6,408.95 286.4,408.78 287.2,408.80 288.0,408.44 288.8,408.20 289.6,408.13 290.4,408.08 291.2,407.93 292.0,407.75 292.8,407.49 293.6,407.31 294.4,407.13 295.2,406.93 296.0,406.82 296.8,406.78 297.6,406.52 298.4,406.32 299.2,406.26 300.0,406.03 300.8,405.84 301.6,405.62 302.4,405.56 303.2,405.35 304.0,405.18 304.8,405.20 305.6,404.87 306.4,404.88 307.2,404.82 308.0,404.49 308.8,404.23 309.6,404.13 310.4,404.15 311.2,403.96 312.0,403.74 312.8,403.78 313.6,403.67 314.4,403.55 315.2,403.59 316.0,403.59 316.8,403.42 317.6,403.53 318.4,403.50 319.2,403.38 320.0,403.43 320.8,403.36 321.6,403.20 322.4,403.27 323.2,403.33 324.0,403.27 324.8,403.11 325.6,402.95 326.4,402.97 327.2,402.96 328.0,402.99 328.8,402.98 329.6,402.90 330.4,402.74 331.2,402.77 332.0,402.84 332.8,402.84 333.6,402.67 334.4,402.60 335.2,402.60 336.0,402.59 336.8,402.55 337.6,402.64 338.4,402.55 339.2,402.53 340.0,402.52 340.8,402.53 341.6,402.54 342.4,402.43 343.2,402.34 344.0,402.43 344.8,402.47 345.6,402.49 346.4,402.42 347.2,402.28 348.0,402.22 348.8,402.14 349.6,402.11 350.4,402.17 351.2,402.08 352.0,402.19 352.8,402.22 353.6,402.10 354.4,402.30 355.2,402.19 356.0,402.24 356.8,402.29 357.6,402.25 358.4,402.38 359.2,402.59 360.0,402.51 360.8,402.65 361.6,402.71 362.4,402.68 363.2,402.76 364.0,402.93 364.8,402.82 365.6,403.03 366.4,402.84 367.2,402.95 368.0,403.05 368.8,403.17 369.6,403.10 370.4,403.07 371.2,403.06 372.0,403.37 372.8,403.50 373.6,403.44 374.4,403.36 375.2,403.40 376.0,403.31 376.8,403.25 377.6,402.90 378.4,402.97 379.2,402.99 380.0,402.84 380.8,402.74 381.6,402.70 382.4,402.68 383.2,402.42 384.0,402.46 384.8,402.16 385.6,402.08 386.4,401.97 387.2,401.86 388.0,401.93 388.8,401.68 389.6,401.68 390.4,401.61 391.2,401.31 392.0,401.41 392.8,401.27 393.6,401.21 394.4,400.97 395.2,401.00 396.0,400.79 396.8,400.73 397.6,400.66 398.4,400.52 399.2,400.39 400.0,400.28 400.8,400.23 401.6,399.97 402.4,399.96 403.2,399.93 404.0,399.68 404.8,399.49 405.6,399.61 406.4,399.45 407.2,399.23 408.0,399.12 408.8,398.92 409.6,399.01 410.4,398.79 411.2,398.65 412.0,398.76 412.8,398.66 413.6,398.83 414.4,398.74 415.2,398.64 416.0,398.73 416.8,398.61 417.6,398.74 418.4,398.76 419.2,398.74 420.0,398.63 420.8,398.58 421.6,398.42 422.4,398.40 423.2,398.31 424.0,398.26 424.8,398.47 425.6,398.44 426.4,398.41 427.2,398.49 428.0,398.28 428.8,398.43 429.6,398.23 430.4,398.34 431.2,398.40 432.0,398.28 432.8,398.14 433.6,398.17 434.4,398.26 435.2,398.10 436.0,398.24 436.8,398.04 437.6,397.96 438.4,398.12 439.2,397.94 440.0,397.97 440.8,398.20 441.6,398.42 442.4,398.59 443.2,398.84 444.0,399.00 444.8,399.13 445.6,399.25 446.4,399.49 447.2,399.67 448.0,399.95 448.8,399.74 449.6,399.64 450.4,399.29 451.2,398.91 452.0,398.78 452.8,398.48 453.6,398.36 454.4,398.11 455.2,397.83 456.0,397.50 456.8,397.27 457.6,396.89 458.4,396.80 459.2,396.51 460.0,396.04 460.8,395.94 461.6,395.82 462.4,395.92 463.2,396.05 464.0,396.10 464.8,396.02 465.6,396.25 466.4,396.20 467.2,396.12 468.0,396.32 468.8,396.39 469.6,396.33 470.4,396.38 471.2,396.36 472.0,396.61 472.8,396.75 473.6,396.64 474.4,396.60 475.2,396.83 476.0,396.96 476.8,397.01 477.6,396.84 478.4,396.91 479.2,397.08 480.0,397.12 480.8,397.20 481.6,397.11 482.4,396.83 483.2,396.87 484.0,396.59 484.8,396.45 485.6,396.34 486.4,396.27 487.2,396.07 488.0,396.10 488.8,395.83 489.6,395.69 490.4,395.74 491.2,395.65 492.0,395.36 492.8,395.23 493.6,395.20 494.4,394.97 495.2,394.93 496.0,394.65 496.8,394.45 497.6,394.52 498.4,394.44 499.2,394.29 500.0,394.24 500.8,394.08 501.6,393.86 502.4,393.66 503.2,393.60 504.0,393.67 504.8,393.36 505.6,393.36 506.4,393.42 507.2,393.19 508.0,393.19 508.8,392.98 509.6,392.92 510.4,392.93 511.2,392.74 512.0,392.63 512.8,392.42 513.6,392.25 514.4,392.12 515.2,391.75 516.0,391.48 516.8,391.44 517.6,391.26 518.4,390.88 519.2,390.86 520.0,390.50 520.8,390.48 521.6,390.11 522.4,389.86 523.2,389.67 524.0,389.49 524.8,389.24 525.6,389.25 526.4,388.97 527.2,388.91 528.0,388.60 528.8,388.50 529.6,388.15 530.4,388.12 531.2,387.87 532.0,387.61 532.8,387.33 533.6,387.27 534.4,387.11 535.2,386.93 536.0,386.55 536.8,386.44 537.6,386.44 538.4,386.28 539.2,386.27 540.0,385.96 540.8,385.98 541.6,385.76 542.4,385.78 543.2,385.69 544.0,385.64 544.8,385.66 545.6,385.51 546.4,385.25 547.2,384.85 548.0,384.64 548.8,384.29 549.6,384.24 550.4,384.02 551.2,383.69 552.0,383.57 552.8,383.31 553.6,383.02 554.4,382.84 555.2,382.58 556.0,382.22 556.8,382.02 557.6,381.66 558.4,381.68 559.2,381.32 560.0,381.12 560.8,380.96 561.6,380.58 562.4,380.33 563.2,380.15 564.0,379.91 564.8,379.78 565.6,379.54 566.4,379.19 567.2,378.89 568.0,378.68 568.8,378.53 569.6,378.28 570.4,378.12 571.2,377.86 572.0,377.67 572.8,377.30 573.6,377.05 574.4,376.70 575.2,376.63 576.0,376.38 576.8,376.02 577.6,375.75 578.4,375.39 579.2,375.36 580.0,375.06 580.8,374.71 581.6,374.66 582.4,374.44 583.2,374.06 584.0,373.82 584.8,373.45 585.6,373.32 586.4,373.09 587.2,372.91 588.0,372.69 588.8,372.57 589.6,372.58 590.4,372.56 591.2,372.27 592.0,372.01 592.8,372.09 593.6,371.94 594.4,371.83 595.2,371.54 596.0,371.38 596.8,371.23 597.6,371.29 598.4,371.03 599.2,370.87 600.0,370.87 600.8,370.69 601.6,370.42 602.4,370.30 603.2,370.24 604.0,369.95 604.8,369.83 605.6,369.68 606.4,369.23 607.2,369.11 608.0,368.92 608.8,368.69 609.6,368.56 610.4,368.33 611.2,367.99 612.0,367.74 612.8,367.70 613.6,367.47 614.4,367.32 615.2,366.98 616.0,366.79 616.8,366.69 617.6,366.47 618.4,366.24 619.2,366.04 620.0,365.68 620.8,365.61 621.6,365.18 622.4,365.18 623.2,364.80 624.0,364.74 624.8,364.37 625.6,364.22 626.4,363.99 627.2,363.73 628.0,363.65 628.8,363.35 629.6,363.12 630.4,363.14 631.2,362.99 632.0,362.66 632.8,362.48 633.6,362.53 634.4,362.22 635.2,362.19 636.0,361.91 636.8,361.71 637.6,361.65 638.4,361.62 639.2,361.53 640.0,361.29 640.8,360.94 641.6,360.75 642.4,360.81 643.2,360.71 644.0,360.45 644.8,360.26 645.6,360.15 646.4,359.97 647.2,359.87 648.0,359.60 648.8,359.36 649.6,359.21 650.4,359.08 651.2,358.82 652.0,358.78 652.8,358.57 653.6,358.45 654.4,358.36 655.2,358.24 656.0,358.05 656.8,358.11 657.6,357.78 658.4,357.78 659.2,357.56 660.0,357.52 660.8,357.33 661.6,357.27 662.4,357.05 663.2,356.88 664.0,356.86 664.8,356.76 665.6,356.70 666.4,356.47 667.2,356.38 668.0,356.28 668.8,356.08 669.6,356.06 670.4,355.91 671.2,355.95 672.0,355.74 672.8,355.48 673.6,355.59 674.4,355.34 675.2,355.22 676.0,354.98 676.8,354.96 677.6,354.78 678.4,354.65 679.2,354.68 680.0,354.57 680.8,354.45 681.6,354.41 682.4,354.10 683.2,354.04 684.0,354.00 684.8,353.86 685.6,353.80 686.4,353.53 687.2,353.39 688.0,353.35 688.8,353.13 689.6,353.13 690.4,352.84 691.2,352.78 692.0,352.58 692.8,352.41 693.6,352.36 694.4,352.36 695.2,352.00 696.0,351.82 696.8,351.80 697.6,351.59 698.4,351.49 699.2,351.35 700.0,351.46 700.8,351.19 701.6,351.29 702.4,351.20 703.2,350.97 704.0,351.03 704.8,350.86 705.6,350.59 706.4,350.58 707.2,350.40 708.0,350.31 708.8,350.41 709.6,350.29 710.4,350.07 711.2,350.00 712.0,349.90 712.8,349.87 713.6,349.76 714.4,349.79 715.2,349.69 716.0,349.46 716.8,349.43 717.6,349.28 718.4,349.21 719.2,349.07 720.0,349.19 720.8,348.98 721.6,348.95 722.4,348.83 723.2,348.95 724.0,348.82 724.8,348.66 725.6,348.77 726.4,348.74 727.2,348.58 728.0,348.49 728.8,348.46 729.6,348.69 730.4,348.70 731.2,348.47 732.0,348.57 732.8,348.42 733.6,348.52 734.4,348.44 735.2,348.20 736.0,348.10 736.8,348.16 737.6,348.22 738.4,348.31 739.2,348.16 740.0,348.08 740.8,347.90 741.6,347.87 742.4,347.99 743.2,348.04 744.0,347.93 744.8,347.73 745.6,347.88 746.4,347.89 747.2,347.82 748.0,347.87 748.8,347.69 749.6,347.57 750.4,347.64 751.2,347.48 752.0,347.58 752.8,347.59 753.6,347.67 754.4,347.70 755.2,347.75 756.0,347.67 756.8,347.76 757.6,347.88 758.4,347.73 759.2,347.97 760.0,347.84 760.8,347.85 761.6,348.00 762.4,347.97 763.2,348.17 764.0,348.21 764.8,348.25 765.6,348.36 766.4,348.47 767.2,348.56 768.0,348.48 768.8,348.34 769.6,348.55 770.4,348.71 771.2,348.62 772.0,348.68 772.8,348.58 773.6,348.93 774.4,349.22 775.2,349.31 776.0,349.51 776.8,349.78 777.6,349.78 778.4,350.18 779.2,350.42 780.0,350.45 780.8,350.62 781.6,350.92 782.4,351.17 783.2,351.28 784.0,351.46 784.8,351.74 785.6,351.87 786.4,352.12 787.2,352.26 788.0,352.39 788.8,352.26 789.6,352.00 790.4,351.95 791.2,351.66 792.0,351.71 792.8,351.44 793.6,351.42 794.4,351.20 795.2,351.16 796.0,350.93 796.8,350.88 797.6,350.65 798.4,350.38 799.2,350.44 800.0,350.22 800.8,350.17 801.6,349.86 802.4,349.84 803.2,349.58 804.0,349.58 804.8,349.47 805.6,349.40 806.4,349.29 807.2,349.14 808.0,348.77 808.8,348.53 809.6,348.53 810.4,348.52 811.2,348.23 812.0,348.25 812.8,347.94 813.6,347.95 814.4,347.62 815.2,347.50 816.0,347.36 816.8,347.33 817.6,347.16 818.4,347.06 819.2,347.07 820.0,347.06 820.8,346.90 821.6,346.88 822.4,347.11 823.2,346.95 824.0,347.08 824.8,346.88 825.6,346.97 826.4,346.99 827.2,346.92 828.0,346.83 828.8,346.95 829.6,346.91 830.4,346.98 831.2,347.12 832.0,347.11 832.8,347.01 833.6,346.95 834.4,346.91 835.2,347.09 836.0,347.02 836.8,346.90 837.6,346.97 838.4,347.09 839.2,347.00 840.0,347.16 840.8,347.17 841.6,347.15 842.4,347.38 843.2,347.33 844.0,347.47 844.8,347.42 845.6,347.54 846.4,347.66 847.2,347.85 848.0,347.81 848.8,347.88 849.6,348.10 850.4,348.13 851.2,348.29 852.0,348.38 852.8,348.41 853.6,348.57 854.4,348.49 855.2,348.74 856.0,348.62 856.8,348.78 857.6,348.93 858.4,349.01 859.2,348.93 860.0,349.01 860.8,349.20 861.6,349.31 862.4,349.21 863.2,349.24 864.0,349.54 864.8,349.65 865.6,349.59 866.4,349.80 867.2,349.92 868.0,349.87 868.8,349.96 869.6,349.94 870.4,349.82 871.2,350.02 872.0,349.90 872.8,350.01 873.6,349.91 874.4,350.13 875.2,350.09 876.0,350.14 876.8,350.11 877.6,350.25 878.4,350.22 879.2,350.16 880.0,350.04 880.8,350.12 881.6,350.04 882.4,350.22 883.2,350.20 884.0,350.22 884.8,350.35 885.6,350.27 886.4,350.31 887.2,350.29 888.0,350.28 888.8,350.35 889.6,350.37 890.4,350.30 891.2,350.46 892.0,350.46 892.8,350.27 893.6,350.33 894.4,350.42 895.2,350.44 896.0,350.76 896.8,350.79 897.6,350.95 898.4,350.97 899.2,351.12 900.0,351.01 900.8,350.99 901.6,351.03 902.4,351.18 903.2,351.15 904.0,351.47 904.8,351.36 905.6,351.54 906.4,351.51 907.2,351.68 908.0,351.83 908.8,351.87 909.6,351.84 910.4,352.02 911.2,352.17 912.0,352.14 912.8,352.11 913.6,352.34 914.4,352.20 915.2,352.37 916.0,352.28 916.8,352.33 917.6,352.03 918.4,351.92 919.2,351.98 920.0,351.73 920.8,351.62 921.6,351.61 922.4,351.42 923.2,351.13 924.0,351.22 924.8,351.17 925.6,350.85 926.4,350.90 927.2,350.94 928.0,351.03 928.8,351.08 929.6,350.97 930.4,350.94 931.2,351.08 932.0,351.10 932.8,350.96 933.6,351.09 934.4,351.22 935.2,351.16 936.0,351.20"/>
<polyline fill="none" stroke="#33f" stroke-width="1.1" points="89,503.5 301.8,503.5 302.3,429.8 935,429.8"/>
<text x="106" y="445" font-size="9.5" fill="#00f" class="b">Tip increments are 0.01in. (0.254mm.)</text>
<path fill="none" stroke="#222" stroke-width="1" d="M88.90 586V562.3M89.49 586V556.2M90.08 586V560.1M90.66 586V564.3M91.25 586V567.5M91.84 586V572.7M92.43 586V574.0M93.02 586V574.7M93.60 586V574.3M94.19 586V574.8M94.78 586V575.8M95.37 586V574.9M95.96 586V575.5M96.54 586V576.2M97.13 586V576.3M97.72 586V577.3M98.31 586V575.5M98.90 586V576.0M99.48 586V575.8M100.07 586V576.1M100.66 586V575.5M101.25 586V576.0M101.84 586V576.1M102.42 586V576.5M103.01 586V573.5M103.60 586V569.5M104.19 586V565.4M104.78 586V564.3M105.36 586V564.7M105.95 586V565.4M106.54 586V565.5M107.13 586V567.7M107.72 586V566.2M108.30 586V569.1M108.89 586V573.2M109.48 586V576.3M110.07 586V576.5M110.66 586V576.3M111.24 586V576.8M111.83 586V577.1M112.42 586V577.4M113.01 586V578.3M113.60 586V578.0M114.18 586V577.3M114.77 586V578.0M115.36 586V577.9M115.95 586V577.3M116.54 586V577.0M117.12 586V576.8M117.71 586V575.9M118.30 586V575.1M118.89 586V574.6M119.48 586V575.1M120.06 586V574.3M120.65 586V575.6M121.24 586V577.1M121.83 586V576.3M122.42 586V577.5M123.00 586V578.2M123.59 586V578.5M124.18 586V577.8M124.77 586V577.9M125.36 586V577.5M125.94 586V578.1M126.53 586V578.0M127.12 586V578.2M127.71 586V579.0M128.30 586V579.2M128.88 586V579.1M129.47 586V579.3M130.06 586V579.4M130.65 586V580.4M131.24 586V580.4M131.82 586V579.9M132.41 586V580.1M133.00 586V580.5M133.59 586V580.1M134.18 586V579.2M134.76 586V579.1M135.35 586V578.9M135.94 586V578.4M136.53 586V578.2M137.12 586V578.3M137.70 586V578.8M138.29 586V579.2M138.88 586V578.9M139.47 586V578.9M140.06 586V579.4M140.64 586V579.4M141.23 586V580.2M141.82 586V580.8M142.41 586V581.3M143.00 586V581.6M143.58 586V581.4M144.17 586V581.8M144.76 586V582.0M145.35 586V581.9M145.94 586V581.7M146.52 586V582.1M147.11 586V582.2M147.70 586V581.9M148.29 586V582.2M148.88 586V582.1M149.46 586V582.3M150.05 586V582.2M150.64 586V582.3M151.23 586V582.4M151.82 586V582.3M152.40 586V582.7M152.99 586V582.9M153.58 586V582.9M154.17 586V583.1M154.76 586V583.4M155.34 586V583.6M155.93 586V583.9M156.52 586V584.2M157.11 586V584.5M157.70 586V584.6M158.28 586V584.7M158.87 586V584.8M159.46 586V584.8M160.05 586V584.8M160.64 586V584.9M161.22 586V584.8M161.81 586V584.9M162.40 586V584.9M162.99 586V585.0M163.58 586V585.0M164.16 586V585.1M164.75 586V585.0M165.34 586V585.1M165.93 586V585.1M166.52 586V585.0M167.10 586V585.1M167.69 586V585.2M168.28 586V585.1M168.87 586V585.2M169.46 586V585.2M170.04 586V585.3M170.63 586V585.3M171.22 586V585.3M171.81 586V585.4M172.40 586V585.4M172.98 586V585.4M173.57 586V585.4M174.16 586V585.5M174.75 586V585.4M175.34 586V585.4M175.92 586V585.5M176.51 586V585.5M177.10 586V585.6M177.69 586V585.6M178.28 586V585.6M178.86 586V585.6M179.45 586V585.7M180.04 586V585.7M180.63 586V585.7M181.22 586V585.7M181.80 586V585.8M182.39 586V585.8M564.59 586V585.8M565.18 586V585.8M565.77 586V585.8M566.36 586V585.7M566.94 586V585.7M567.53 586V585.7M568.12 586V585.7M568.71 586V585.7M569.30 586V585.7M569.88 586V585.6M570.47 586V585.6M571.06 586V585.6M571.65 586V585.6M572.24 586V585.6M572.82 586V585.6M573.41 586V585.6M574.00 586V585.6M574.59 586V585.6M575.18 586V585.5M575.76 586V585.6M576.35 586V585.5M576.94 586V585.5M577.53 586V585.5M578.12 586V585.5M578.70 586V585.5M579.29 586V585.5M579.88 586V585.4M580.47 586V585.4M581.06 586V585.4M581.64 586V585.4M582.23 586V585.4M582.82 586V585.3M583.41 586V585.4M584.00 586V585.3M584.58 586V585.3M585.17 586V585.3M585.76 586V585.3M586.35 586V585.2M586.94 586V585.2M587.52 586V585.2M588.11 586V585.2M588.70 586V585.1M589.29 586V585.1M589.88 586V585.1M590.46 586V585.0M591.05 586V584.9M591.64 586V584.9M592.23 586V584.9M592.82 586V584.9M593.40 586V584.8M593.99 586V584.7M594.58 586V584.7M595.17 586V584.7M595.76 586V584.7M596.34 586V584.6M596.93 586V584.5M597.52 586V584.5M598.11 586V584.5M598.70 586V584.4M599.28 586V584.4M599.87 586V584.4M600.46 586V584.5M601.05 586V584.3M601.64 586V584.1M602.22 586V584.3M602.81 586V584.2M603.40 586V584.1M603.99 586V584.0M604.58 586V583.8M605.16 586V583.6M605.75 586V583.7M606.34 586V583.3M606.93 586V583.4M607.52 586V582.8M608.10 586V582.3M608.69 586V582.1M609.28 586V582.0M609.87 586V581.5M610.46 586V581.0M611.04 586V580.8M611.63 586V580.5M612.22 586V580.6M612.81 586V580.4M613.40 586V579.5M613.98 586V578.3M614.57 586V577.8M615.16 586V577.4M615.75 586V577.0M616.34 586V576.4M616.92 586V576.5M617.51 586V577.5M618.10 586V577.5M618.69 586V577.2M619.28 586V577.1M619.86 586V577.9M620.45 586V578.3M621.04 586V579.1M621.63 586V579.0M622.22 586V579.3M622.80 586V579.5M623.39 586V579.2M623.98 586V578.9M624.57 586V579.2M625.16 586V579.4M625.74 586V579.1M626.33 586V579.9M626.92 586V579.8M627.51 586V579.6M628.10 586V579.8M628.68 586V579.9M629.27 586V579.8M629.86 586V579.9M630.45 586V579.4M631.04 586V579.5M631.62 586V579.1M632.21 586V579.3M632.80 586V579.0M633.39 586V578.8M633.98 586V578.9M634.56 586V578.9M635.15 586V578.7M635.74 586V578.7M636.33 586V578.3M636.92 586V578.2M637.50 586V577.9M638.09 586V578.2M638.68 586V577.9M639.27 586V577.9M639.86 586V577.6M640.44 586V576.9M641.03 586V576.9M641.62 586V577.5M642.21 586V577.6M642.80 586V569.1M643.38 586V576.3M643.97 586V576.5M644.56 586V576.3M645.15 586V575.3M645.74 586V573.3M646.32 586V572.5M646.91 586V570.5M647.50 586V559.4M648.09 586V569.1M648.68 586V569.6M649.26 586V568.4M649.85 586V566.7M650.44 586V557.5M651.03 586V551.2M651.62 586V545.1M652.20 586V551.7M652.79 586V551.6M653.38 586V550.4M653.97 586V561.6M654.56 586V571.3M655.14 586V573.4M655.73 586V571.3M656.32 586V566.9M656.91 586V564.7M657.50 586V560.4M658.08 586V558.2M658.67 586V556.6M659.26 586V555.9M659.85 586V561.5M660.44 586V562.8M661.02 586V568.6M661.61 586V571.6M662.20 586V570.1M662.79 586V568.0M663.38 586V566.7M663.96 586V566.4M664.55 586V567.6M665.14 586V561.9M665.73 586V554.8M666.32 586V547.1M666.90 586V549.2M667.49 586V555.0M668.08 586V560.9M668.67 586V549.2M669.26 586V551.3M669.84 586V546.0M670.43 586V543.7M671.02 586V537.9M671.61 586V534.5M672.20 586V536.6M672.78 586V537.4M673.37 586V536.6M673.96 586V538.3M674.55 586V538.3M675.14 586V539.6M675.72 586V539.5M676.31 586V540.2M676.90 586V540.4M677.49 586V536.1M678.08 586V534.4M678.66 586V536.5M679.25 586V533.2M679.84 586V534.1M680.43 586V531.8M681.02 586V528.6M681.60 586V529.9M682.19 586V527.5M682.78 586V527.4M683.37 586V529.5M683.96 586V535.2M684.54 586V540.1M685.13 586V539.8M685.72 586V540.2M686.31 586V538.8M686.90 586V541.1M687.48 586V541.2M688.07 586V542.6M688.66 586V540.0M689.25 586V538.5M689.84 586V535.4M690.42 586V534.4M691.01 586V532.1M691.60 586V530.3M692.19 586V526.0M692.78 586V533.1M693.36 586V536.1M693.95 586V537.2M694.54 586V540.6M695.13 586V537.9M695.72 586V536.3M696.30 586V534.2M696.89 586V527.9M697.48 586V528.6M698.07 586V528.2M698.66 586V525.8M699.24 586V524.7M699.83 586V524.3M700.42 586V526.0M701.01 586V528.9M701.60 586V532.6M702.18 586V533.4M702.77 586V536.7M703.36 586V538.1M703.95 586V540.1M704.54 586V539.6M705.12 586V529.7M705.71 586V540.9M706.30 586V543.1M706.89 586V540.5M707.48 586V537.6M708.06 586V539.0M708.65 586V536.8M709.24 586V536.7M709.83 586V534.6M710.42 586V529.9M711.00 586V527.8M711.59 586V524.5M712.18 586V524.0M712.77 586V521.4M713.36 586V525.0M713.94 586V526.8M714.53 586V531.2M715.12 586V532.7M715.71 586V533.3M716.30 586V534.4M716.88 586V545.1M717.47 586V551.2M718.06 586V562.3M718.65 586V562.3M719.24 586V559.1M719.82 586V556.5M720.41 586V555.1M721.00 586V554.4M721.59 586V556.1M722.18 586V548.7M722.76 586V554.2M723.35 586V559.4M723.94 586V559.8M724.53 586V558.3M725.12 586V555.5M725.70 586V555.8M726.29 586V556.8M726.88 586V558.8M727.47 586V557.3M728.06 586V557.3M728.64 586V558.4M729.23 586V558.0M729.82 586V560.1M730.41 586V558.8M731.00 586V559.6M731.58 586V557.8M732.17 586V550.2M732.76 586V547.3M733.35 586V543.2M733.94 586V535.9M734.52 586V532.3M735.11 586V532.2M735.70 586V531.3M736.29 586V537.0M736.88 586V540.5M737.46 586V534.5M738.05 586V544.6M738.64 586V546.2M739.23 586V534.0M739.82 586V543.7M740.40 586V542.3M740.99 586V540.7M741.58 586V541.5M742.17 586V541.7M742.76 586V541.8M743.34 586V540.9M743.93 586V540.2M744.52 586V539.7M745.11 586V542.5M745.70 586V543.6M746.28 586V542.1M746.87 586V540.8M747.46 586V542.8M748.05 586V544.3M748.64 586V546.0M749.22 586V544.8M749.81 586V543.8M750.40 586V543.8M750.99 586V545.5M751.58 586V546.0M752.16 586V547.7M752.75 586V546.1M753.34 586V541.9M753.93 586V537.2M754.52 586V533.0M755.10 586V531.5M755.69 586V528.2M756.28 586V527.3M756.87 586V524.8M757.46 586V524.3M758.04 586V522.4M758.63 586V524.3M759.22 586V530.0M759.81 586V532.2M760.40 586V536.7M760.98 586V540.0M761.57 586V538.6M762.16 586V536.2M762.75 586V534.6M763.34 586V535.8M763.92 586V536.8M764.51 586V536.7M765.10 586V532.5M765.69 586V529.7M766.28 586V528.7M766.86 586V522.7M767.45 586V520.4M768.04 586V518.6M768.63 586V521.3M769.22 586V523.1M769.80 586V523.3M770.39 586V525.4M770.98 586V525.1M771.57 586V526.7M772.16 586V525.9M772.74 586V523.2M773.33 586V533.6M773.92 586V530.1M774.51 586V524.9M775.10 586V518.1M775.68 586V514.6M776.27 586V514.5M776.86 586V515.3M777.45 586V518.1M778.04 586V517.7M778.62 586V519.6M779.21 586V520.7M779.80 586V520.5M780.39 586V517.6M780.98 586V516.1M781.56 586V517.7M782.15 586V520.3M782.74 586V519.4M783.33 586V522.5M783.92 586V520.6M784.50 586V520.4M785.09 586V520.4M785.68 586V519.5M786.27 586V518.9M786.86 586V517.6M787.44 586V517.5M788.03 586V518.5M788.62 586V520.4M789.21 586V522.8M789.80 586V522.2M790.38 586V522.3M790.97 586V520.8M791.56 586V521.3M792.15 586V522.8M792.74 586V520.2M793.32 586V518.3M793.91 586V520.4M794.50 586V523.4M795.09 586V520.4M795.68 586V520.1M796.26 586V521.2M796.85 586V523.4M797.44 586V523.5M798.03 586V523.0M798.62 586V522.7M799.20 586V520.8M799.79 586V521.2M800.38 586V522.1M800.97 586V521.8M801.56 586V518.1M802.14 586V516.4M802.73 586V514.9M803.32 586V513.0M803.91 586V513.6M804.50 586V514.2M805.08 586V516.3M805.67 586V516.3M806.26 586V514.8M806.85 586V515.2M807.44 586V518.0M808.02 586V516.2M808.61 586V516.5M809.20 586V516.3M809.79 586V518.8M810.38 586V519.2M810.96 586V518.8M811.55 586V519.5M812.14 586V521.0M812.73 586V520.4M813.32 586V520.2M813.90 586V518.5M814.49 586V518.4M815.08 586V513.0M815.67 586V521.4M816.26 586V520.4M816.84 586V519.5M817.43 586V518.4M818.02 586V518.4M818.61 586V517.8M819.20 586V517.1M819.78 586V514.9M820.37 586V519.8M820.96 586V521.2M821.55 586V520.8M822.14 586V520.6M822.72 586V520.1M823.31 586V519.6M823.90 586V519.4M824.49 586V522.8M825.08 586V520.9M825.66 586V524.4M826.25 586V522.8M826.84 586V518.0M827.43 586V520.8M828.02 586V516.9M828.60 586V521.1M829.19 586V526.8M829.78 586V526.3M830.37 586V525.8M830.96 586V530.0M831.54 586V525.1M832.13 586V531.9M832.72 586V536.5M833.31 586V538.0M833.90 586V541.4M834.48 586V547.6M835.07 586V553.3M835.66 586V557.0M836.25 586V559.6M836.84 586V556.0M837.42 586V556.1M838.01 586V555.5M838.60 586V556.9M839.19 586V555.4M839.78 586V554.2M840.36 586V555.2M840.95 586V552.7M841.54 586V551.2M842.13 586V550.6M842.72 586V548.8M843.30 586V548.5M843.89 586V547.4M844.48 586V551.1M845.07 586V551.1M845.66 586V552.8M846.24 586V554.7M846.83 586V554.5M847.42 586V557.1M848.01 586V554.8M848.60 586V542.3M849.18 586V550.9M849.77 586V547.7M850.36 586V539.0M850.95 586V544.0M851.54 586V540.6M852.12 586V539.4M852.71 586V538.8M853.30 586V538.9M853.89 586V538.7M854.48 586V538.8M855.06 586V538.2M855.65 586V536.8M856.24 586V536.6M856.83 586V532.6M857.42 586V531.7M858.00 586V531.5M858.59 586V529.7M859.18 586V526.8M859.77 586V522.4M860.36 586V520.0M860.94 586V521.1M861.53 586V525.4M862.12 586V529.6M862.71 586V534.7M863.30 586V540.3M863.88 586V546.4M864.47 586V548.9M865.06 586V555.3M865.65 586V559.3M866.24 586V553.9M866.82 586V548.3M867.41 586V537.1M868.00 586V542.0M868.59 586V534.5M869.18 586V533.6M869.76 586V538.3M870.35 586V544.1M870.94 586V547.2M871.53 586V551.6M872.12 586V556.0M872.70 586V558.9M873.29 586V557.2M873.88 586V553.9M874.47 586V552.0M875.06 586V542.3M875.64 586V549.9M876.23 586V547.6M876.82 586V543.5M877.41 586V543.6M878.00 586V542.8M878.58 586V539.5M879.17 586V539.5M879.76 586V538.0M880.35 586V541.7M880.94 586V547.3M881.52 586V546.9M882.11 586V550.9M882.70 586V551.2M883.29 586V553.2M883.88 586V553.2M884.46 586V553.0M885.05 586V553.2M885.64 586V558.2M886.23 586V557.5M886.82 586V559.6M887.40 586V557.5M887.99 586V559.4M888.58 586V561.2M889.17 586V564.2M889.76 586V567.0M890.34 586V564.2M890.93 586V568.1M891.52 586V565.5M892.11 586V562.6M892.70 586V556.6M893.28 586V553.3M893.87 586V549.2M894.46 586V546.7M895.05 586V542.8M895.64 586V545.8M896.22 586V548.1M896.81 586V550.0M897.40 586V550.0M897.99 586V549.8M898.58 586V551.5M899.16 586V554.0M899.75 586V555.4M900.34 586V556.2M900.93 586V560.0M901.52 586V560.5M902.10 586V563.2M902.69 586V567.2M903.28 586V568.2M903.87 586V565.4M904.46 586V563.5M905.04 586V561.7M905.63 586V558.3M906.22 586V555.2M906.81 586V553.6M907.40 586V550.3M907.98 586V550.2M908.57 586V550.9M909.16 586V549.0M909.75 586V550.8M910.34 586V550.5M910.92 586V549.6M911.51 586V547.6M912.10 586V547.8M912.69 586V546.5M913.28 586V548.6M913.86 586V547.6M914.45 586V547.1M915.04 586V548.4M915.63 586V547.2M916.22 586V547.4M916.80 586V549.4M917.39 586V549.2M917.98 586V549.4M918.57 586V553.2M919.16 586V558.0M919.74 586V560.7M920.33 586V566.4M920.92 586V571.5M921.51 586V573.5M922.10 586V563.3M922.68 586V574.6M923.27 586V574.5M923.86 586V574.2M924.45 586V567.5M925.04 586V573.2M925.62 586V573.6M926.21 586V571.9M926.80 586V565.5M927.39 586V571.4M927.98 586V571.2M928.56 586V571.5M929.15 586V571.7M929.74 586V572.6M930.33 586V571.7M930.92 586V571.9M931.50 586V571.7M932.09 586V571.5M932.68 586V572.7M933.27 586V573.6M933.86 586V574.1M934.44 586V573.0M935.03 586V573.0"/>
<line x1="90.5" y1="509.5" x2="90.5" y2="512" stroke="#000" stroke-width="1"/>
<text x="90.5" y="518" font-size="9.5" fill="#a020f0" class="p" text-anchor="middle">14</text>
<line x1="670.2" y1="509.5" x2="670.2" y2="512" stroke="#000" stroke-width="1"/>
<text x="670.2" y="518" font-size="9.5" fill="#a020f0" class="p" text-anchor="middle">1</text>
<line x1="689.5" y1="509.5" x2="689.5" y2="512" stroke="#000" stroke-width="1"/>
<text x="689.5" y="518" font-size="9.5" fill="#a020f0" class="p" text-anchor="middle">2</text>
<line x1="708.6" y1="509.5" x2="708.6" y2="512" stroke="#000" stroke-width="1"/>
<text x="708.6" y="518" font-size="9.5" fill="#a020f0" class="p" text-anchor="middle">3</text>
<line x1="734.2" y1="509.5" x2="734.2" y2="512" stroke="#000" stroke-width="1"/>
<text x="734.2" y="518" font-size="9.5" fill="#a020f0" class="p" text-anchor="middle">4</text>
<line x1="754.4" y1="509.5" x2="754.4" y2="512" stroke="#000" stroke-width="1"/>
<text x="754.4" y="518" font-size="9.5" fill="#a020f0" class="p" text-anchor="middle">5</text>
<line x1="770.0" y1="509.5" x2="770.0" y2="512" stroke="#000" stroke-width="1"/>
<text x="770.0" y="518" font-size="9.5" fill="#a020f0" class="p" text-anchor="middle">6</text>
<line x1="783.5" y1="509.5" x2="783.5" y2="512" stroke="#000" stroke-width="1"/>
<text x="783.5" y="518" font-size="9.5" fill="#a020f0" class="p" text-anchor="middle">7</text>
<line x1="798.5" y1="509.5" x2="798.5" y2="512" stroke="#000" stroke-width="1"/>
<text x="798.5" y="518" font-size="9.5" fill="#a020f0" class="p" text-anchor="middle">8</text>
<line x1="812.3" y1="509.5" x2="812.3" y2="512" stroke="#000" stroke-width="1"/>
<text x="812.3" y="518" font-size="9.5" fill="#a020f0" class="p" text-anchor="middle">9</text>
<line x1="847.4" y1="509.5" x2="847.4" y2="512" stroke="#000" stroke-width="1"/>
<text x="847.4" y="518" font-size="9.5" fill="#a020f0" class="p" text-anchor="middle">11</text>
<line x1="867.3" y1="509.5" x2="867.3" y2="512" stroke="#000" stroke-width="1"/>
<text x="867.3" y="518" font-size="9.5" fill="#a020f0" class="p" text-anchor="middle">12</text>
<line x1="895.1" y1="509.5" x2="895.1" y2="512" stroke="#000" stroke-width="1"/>
<text x="895.1" y="518" font-size="9.5" fill="#a020f0" class="p" text-anchor="middle">13</text>
<line x1="931.3" y1="509.5" x2="931.3" y2="512" stroke="#000" stroke-width="1"/>
<text x="931.3" y="518" font-size="9.5" fill="#a020f0" class="p" text-anchor="middle">14</text>
<line x1="825.6" y1="509.5" x2="825.6" y2="512" stroke="#000" stroke-width="1"/>
<line x1="336.2" y1="509.5" x2="336.2" y2="512" stroke="#000" stroke-width="1"/>
<text x="337" y="518" font-size="9.5" fill="#a020f0" class="p" text-anchor="middle">Sum of previous day</text>
<text x="337" y="529" font-size="9.5" fill="#a020f0" class="p" text-anchor="middle">&lt;--- 14.61 MJoules/m^2</text>
</svg></body></html>
